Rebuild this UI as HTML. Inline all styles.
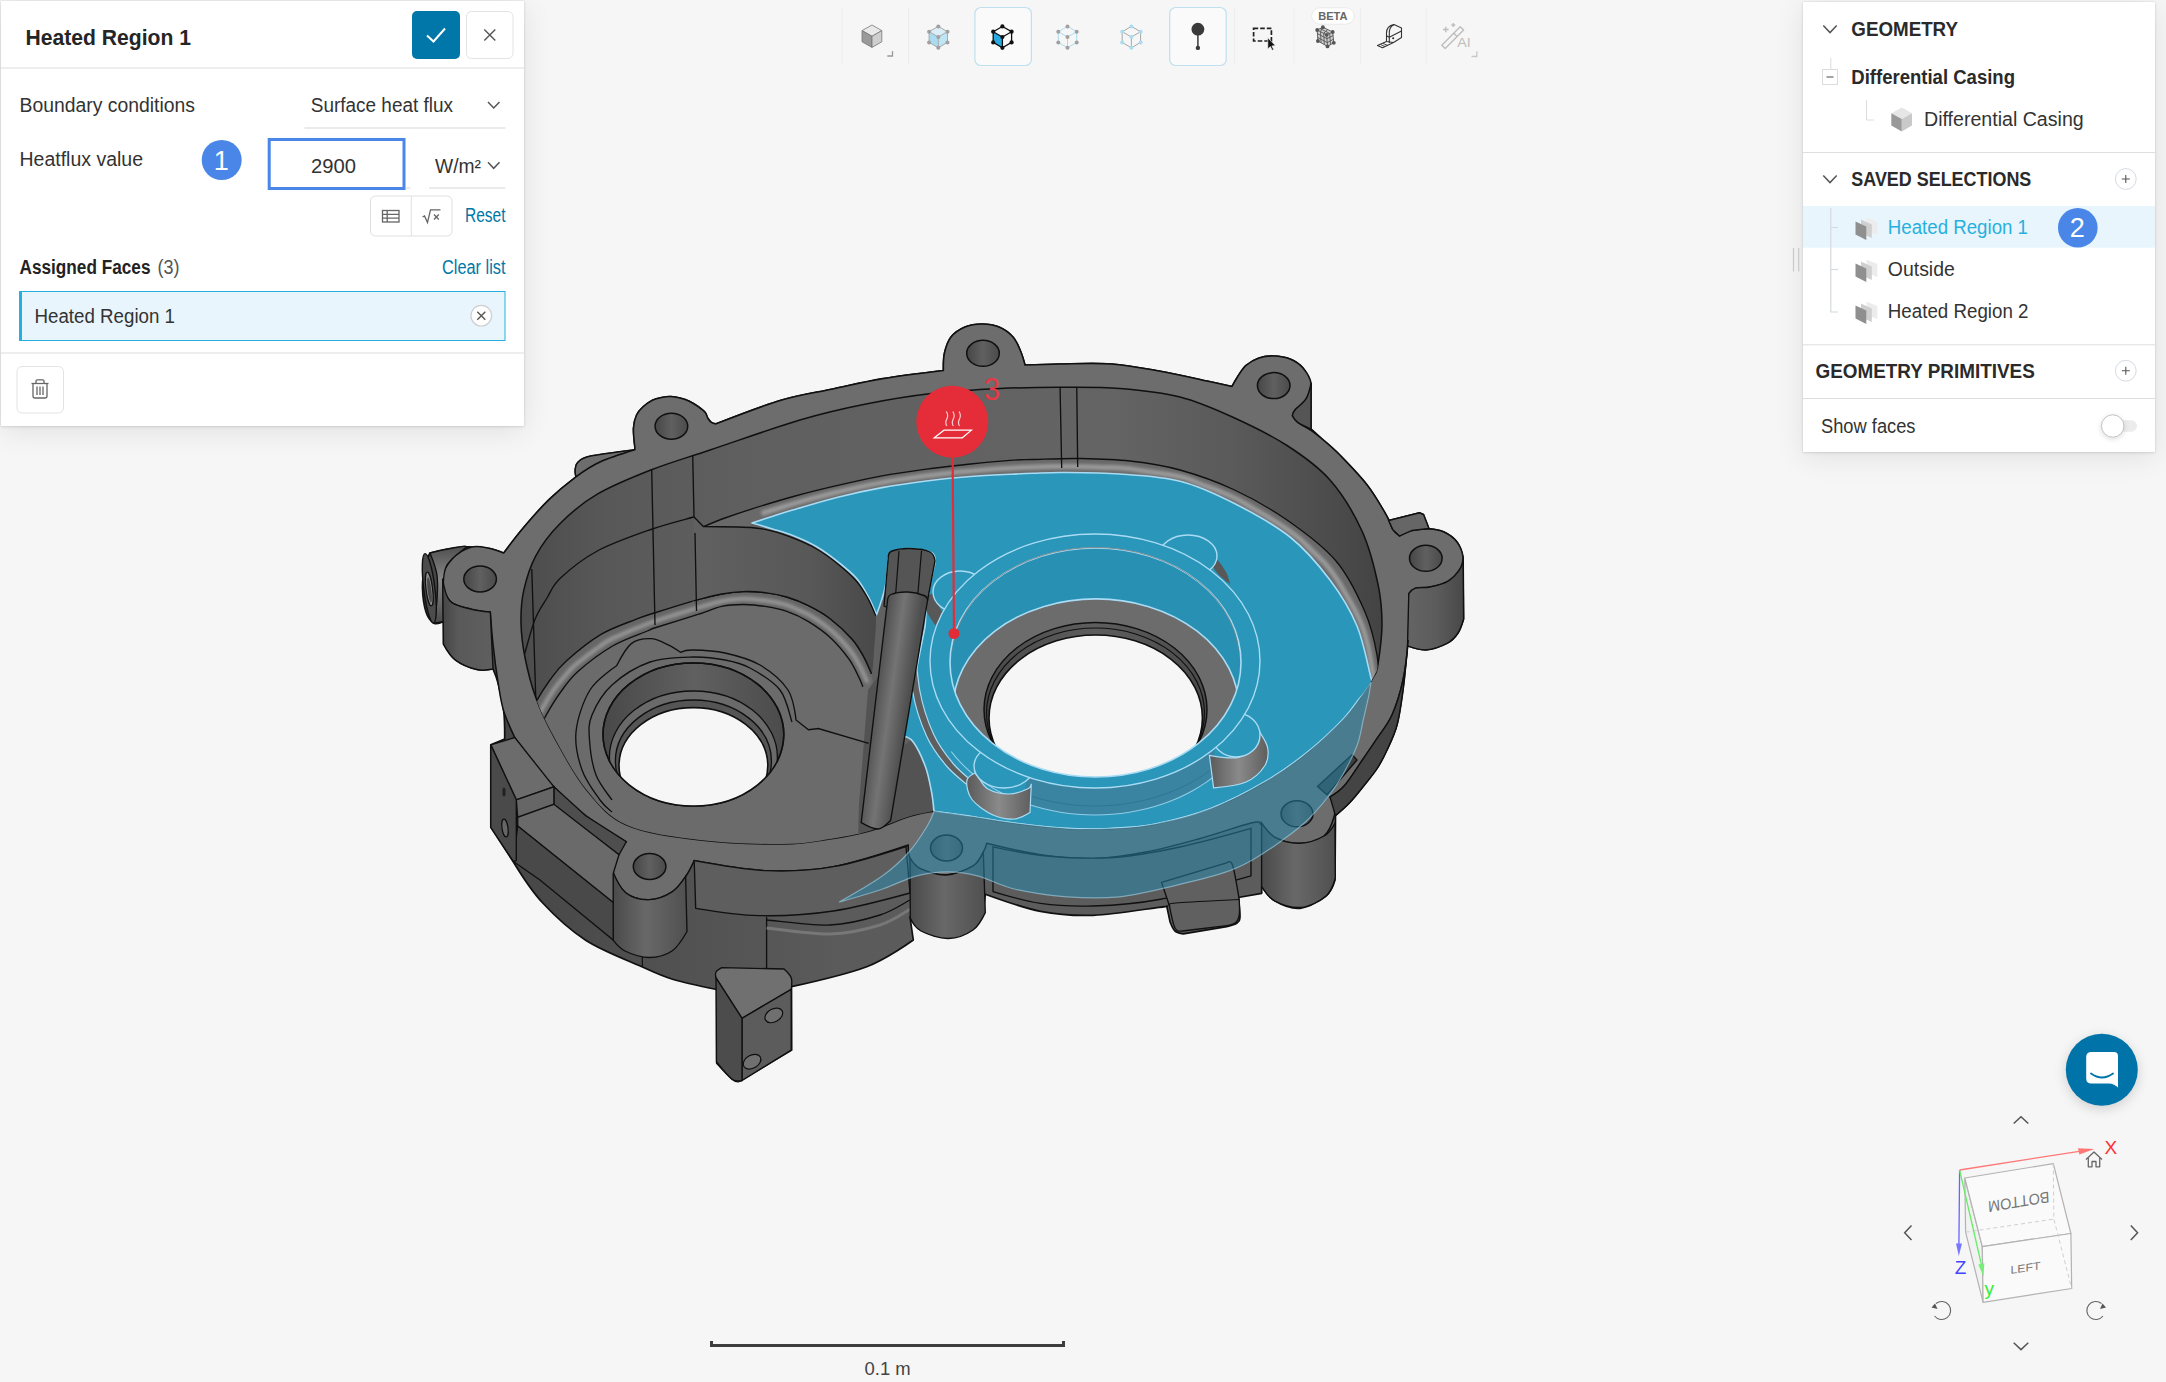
<!DOCTYPE html>
<html lang="en">
<head>
<meta charset="utf-8">
<title>Heated Region 1</title>
<style>
html,body{margin:0;padding:0;}
body{width:2166px;height:1382px;overflow:hidden;background:#f6f6f6;position:relative;font-family:"Liberation Sans",sans-serif;}
svg{position:absolute;left:0;top:0;overflow:visible;}
svg text{font-family:"Liberation Sans",sans-serif;}
.abs{position:absolute;}
#viewer{left:0;top:0;width:2166px;height:1382px;}
#leftpanel{left:1px;top:1px;width:523px;height:425px;background:#fff;box-shadow:0 1px 3px rgba(0,0,0,.10),0 5px 28px rgba(0,0,0,.09),0 0 1px rgba(0,0,0,.15);}
#rightpanel{left:1803px;top:2px;width:352px;height:450px;background:#fff;box-shadow:0 1px 3px rgba(0,0,0,.10),0 5px 28px rgba(0,0,0,.09),0 0 1px rgba(0,0,0,.15);}
.t{fill:#333;font-size:19.5px;}
.b{font-weight:bold;}
.lnk{fill:#0077a8;}
</style>
</head>
<body>
<div id="viewer" class="abs">
<svg id="model" width="2166" height="1382" viewBox="0 0 2166 1382">
<defs>
<linearGradient id="gwall" gradientUnits="userSpaceOnUse" x1="520" y1="0" x2="1390" y2="0">
<stop offset="0" stop-color="#4c4c4c"/><stop offset="0.1" stop-color="#585858"/><stop offset="0.25" stop-color="#5f5f5f"/><stop offset="0.5" stop-color="#626262"/><stop offset="0.68" stop-color="#646464"/><stop offset="0.82" stop-color="#5a5a5a"/><stop offset="0.93" stop-color="#4c4c4c"/><stop offset="1" stop-color="#424242"/>
</linearGradient>
<linearGradient id="gpocket" gradientUnits="userSpaceOnUse" x1="700" y1="0" x2="880" y2="0">
<stop offset="0" stop-color="#606060"/><stop offset="0.6" stop-color="#585858"/><stop offset="1" stop-color="#484848"/>
</linearGradient>
<linearGradient id="ghole" gradientUnits="userSpaceOnUse" x1="0" y1="0" x2="1" y2="0" gradientTransform="matrix(34 0 0 1 -17 0)">
<stop offset="0" stop-color="#454545"/><stop offset="0.5" stop-color="#606060"/><stop offset="1" stop-color="#4a4a4a"/>
</linearGradient>
<linearGradient id="gcyl" x1="0" y1="0" x2="1" y2="0">
<stop offset="0" stop-color="#4a4a4a"/><stop offset="0.45" stop-color="#686868"/><stop offset="1" stop-color="#505050"/>
</linearGradient>
<linearGradient id="grod" x1="0" y1="0" x2="1" y2="0">
<stop offset="0" stop-color="#4c4c4c"/><stop offset="0.5" stop-color="#727272"/><stop offset="1" stop-color="#4e4e4e"/>
</linearGradient>
<linearGradient id="gbore1" gradientUnits="userSpaceOnUse" x1="600" y1="0" x2="790" y2="0">
<stop offset="0" stop-color="#484848"/><stop offset="0.5" stop-color="#606060"/><stop offset="1" stop-color="#4a4a4a"/>
</linearGradient>
<linearGradient id="gbore2" gradientUnits="userSpaceOnUse" x1="985" y1="0" x2="1206" y2="0">
<stop offset="0" stop-color="#484848"/><stop offset="0.5" stop-color="#5e5e5e"/><stop offset="1" stop-color="#4a4a4a"/>
</linearGradient>
</defs>
<linearGradient id="gside" gradientUnits="userSpaceOnUse" x1="490" y1="0" x2="1000" y2="0"><stop offset="0" stop-color="#454545"/><stop offset="0.35" stop-color="#515151"/><stop offset="0.7" stop-color="#5b5b5b"/><stop offset="1" stop-color="#5c5c5c"/></linearGradient>
<path d="M634.9 447.3 C634.9 447.3 633.2 433.4 633.5 428 C633.8 422.6 635 418.5 636.6 415 C638.2 411.5 640.5 409.2 643.1 406.8 C645.7 404.4 649.2 401.9 652.3 400.3 C655.4 398.8 658.5 398.1 661.6 397.5 C664.7 396.9 667.7 396.5 670.8 396.6 C673.9 396.7 676.9 397.2 680 398 C683.1 398.8 686.2 399.7 689.3 401.2 C692.4 402.7 695.9 404.9 698.5 406.8 C701.1 408.7 703.4 410.4 705 412.3 C706.6 414.2 706.9 416.8 708 418.5 C709.1 420.2 710.1 421.6 711.4 422.5 C712.7 423.4 716 423.9 716 423.9 C716 423.9 761.4 406.1 780.9 400.3 C800.4 394.5 816.1 392.6 833 389 C849.9 385.4 864.1 381.8 882.5 378.7 C900.9 375.6 943.4 370.5 943.4 370.5 C943.4 370.5 943.2 358.6 944.5 353 C945.8 347.4 947.6 341.3 951 337 C954.4 332.7 959.8 329.2 965 327 C970.2 324.8 976.3 324 982 324 C987.7 324 993.8 324.8 999 327 C1004.2 329.2 1009.4 333 1013 337 C1016.6 341 1018.5 346.3 1020.5 351 C1022.5 355.7 1025 365 1025 365 C1025 365 1045.6 364.2 1060 364 C1074.4 363.8 1095 362.8 1111.5 364 C1128 365.2 1143.1 368.2 1159 371 C1174.9 373.8 1194.8 378.4 1207 381 C1219.2 383.6 1232 386.5 1232 386.5 C1232 386.5 1235.2 380.5 1237.5 377 C1239.8 373.5 1242.4 368.7 1246 365.5 C1249.6 362.3 1254.4 359.6 1259 358 C1263.6 356.4 1268.5 355.8 1273.7 356 C1278.9 356.2 1285.1 357 1290 359 C1294.9 361 1299.5 363.9 1303 368 C1306.5 372.1 1311 383.5 1311 383.5 L1311 429 L1322 439 C1322 439 1333 448.1 1340.6 455.8 C1348.1 463.5 1359.7 475.4 1367.3 485.2 C1374.9 495 1382.4 508.7 1386 514.6 C1389.6 520.5 1388.7 520.5 1388.7 520.5 L1419.5 512.8 L1423.5 514.6 L1428.9 528.5 C1428.9 528.5 1439.3 529.8 1444 532 C1448.7 534.2 1453.8 537.8 1457 542 C1460.2 546.2 1463.1 557.5 1463.1 557.5 L1463.6 619 C1463.6 619 1460.7 629 1458 633 C1455.3 637 1452.9 640.2 1447.6 643 C1442.3 645.8 1432.9 649.3 1426.2 649.8 C1419.5 650.3 1407.5 645.8 1407.5 645.8 C1407.5 645.8 1404.8 676.8 1403 690 C1401.2 703.2 1399.7 715 1397 725 C1394.3 735 1390.3 742.8 1387 750 C1383.7 757.2 1381.2 762.2 1377 768.5 C1372.8 774.8 1366.6 782.2 1362 788 C1357.4 793.8 1353.7 798.4 1349.3 803 C1344.9 807.6 1335.5 815.6 1335.5 815.6 L1335 880 C1335 880 1331.8 891.3 1326 896 C1320.2 900.7 1308.5 907.5 1300 908.3 C1291.5 909.1 1281.4 904.7 1275 901 C1268.6 897.3 1261.7 886 1261.7 886 L1261.7 893.3 L1238.3 897.5 C1238.3 897.5 1240.2 912.5 1240 916.7 C1239.8 921 1239.2 921.3 1237 923 C1234.8 924.7 1226.7 926.7 1226.7 926.7 L1183.3 933.8 C1183.3 933.8 1177.2 933 1175 931 C1172.8 929 1170 921.7 1170 921.7 L1166.7 906 C1166.7 906 1171.2 905.9 1159 907.4 C1146.8 908.9 1113 914.6 1093.2 915.3 C1073.5 915.9 1058.5 914.8 1040.5 911.3 C1022.5 907.8 985.3 894.2 985.3 894.2 L983.3 913.3 C983.3 913.3 979.1 925.1 973 929 C966.9 932.9 955.4 936.5 946.7 936.7 C938 936.9 927.1 933.3 921 930 C914.9 926.7 910 917 910 917 L913.3 940 C913.3 940 887 958.9 866.7 966.7 C846.4 974.5 791.5 986.7 791.5 986.7 L791.7 1050 L739 1081.5 C739 1081.5 735.6 1082 731.9 1079 C728.2 1076 716.7 1063.3 716.7 1063.3 L716.7 989.5 C716.7 989.5 685.2 983.1 672.5 979.2 C659.8 975.3 655.2 972.7 640.7 966.2 C626.2 959.7 602.1 950.8 585.7 940.2 C569.3 929.6 554.3 915.5 542.3 902.5 C530.2 889.5 513.4 862 513.4 862 L490.8 827.3 L490.8 744.9 L504.7 739 C504.7 739 504.8 720.2 503.7 711 C502.6 701.8 500.1 691 498.3 684 C496.5 677 493 669 493 669 C493 669 483.1 671 476.9 669.5 C470.6 668 461.1 664.2 455.5 660 C449.9 655.8 443.5 644 443.5 644 L443.5 621.5 C443.5 621.5 436.9 624.8 434 623.2 C431.1 621.6 427.9 617.9 426 612 C424.1 606.1 422.7 595.8 422.5 588 C422.3 580.2 423.8 570.8 425 565 C426.2 559.2 430 553 430 553 C430 553 448.6 548.7 455.5 547.7 C462.4 546.7 465.8 546.9 471.5 547 C477.2 547.1 484.6 547.5 490 548.5 C495.4 549.5 503.7 553.1 503.7 553.1 C503.7 553.1 514.9 537.9 522.4 529 C529.9 520.1 540.1 508.3 549 499.6 C557.9 490.9 576 476.8 576 476.8 C576 476.8 574.9 472.4 575.2 470 C575.5 467.6 575.2 464.8 577.8 462.5 C580.3 460.2 581 458.3 590.5 456.2 C600 454.1 634.9 449.8 634.9 449.8 L634.9 447.3 Z" fill="url(#gside)" stroke="#101010" stroke-width="1.7" stroke-linejoin="round"/>
<filter id="bl1" x="-10%" y="-10%" width="120%" height="120%"><feGaussianBlur stdDeviation="1.6"/></filter>
<path d="M576 476.8 C576 476.8 574.9 472.4 575.2 470 C575.5 467.6 575.2 464.8 577.8 462.5 C580.3 460.2 581 458.3 590.5 456.2 C600 454.1 634.9 449.8 634.9 449.8 C634.9 449.8 609.8 457.5 600 462 C590.2 466.5 576 476.8 576 476.8 Z" fill="#6d6d6d" stroke="#101010" stroke-width="1.35"/>
<path d="M634.9 447.3 C634.9 447.3 633.2 433.4 633.5 428 C633.8 422.6 635 418.5 636.6 415 C638.2 411.5 640.5 409.2 643.1 406.8 C645.7 404.4 649.2 401.9 652.3 400.3 C655.4 398.8 658.5 398.1 661.6 397.5 C664.7 396.9 667.7 396.5 670.8 396.6 C673.9 396.7 676.9 397.2 680 398 C683.1 398.8 686.2 399.7 689.3 401.2 C692.4 402.7 695.9 404.9 698.5 406.8 C701.1 408.7 703.4 410.4 705 412.3 C706.6 414.2 706.9 416.8 708 418.5 C709.1 420.2 710.1 421.6 711.4 422.5 C712.7 423.4 716 423.9 716 423.9 C716 423.9 761.4 406.1 780.9 400.3 C800.4 394.5 816.1 392.6 833 389 C849.9 385.4 864.1 381.8 882.5 378.7 C900.9 375.6 943.4 370.5 943.4 370.5 C943.4 370.5 943.2 358.6 944.5 353 C945.8 347.4 947.6 341.3 951 337 C954.4 332.7 959.8 329.2 965 327 C970.2 324.8 976.3 324 982 324 C987.7 324 993.8 324.8 999 327 C1004.2 329.2 1009.4 333 1013 337 C1016.6 341 1018.5 346.3 1020.5 351 C1022.5 355.7 1025 365 1025 365 C1025 365 1045.6 364.2 1060 364 C1074.4 363.8 1095 362.8 1111.5 364 C1128 365.2 1143.1 368.2 1159 371 C1174.9 373.8 1194.8 378.4 1207 381 C1219.2 383.6 1232 386.5 1232 386.5 C1232 386.5 1235.2 380.5 1237.5 377 C1239.8 373.5 1242.4 368.7 1246 365.5 C1249.6 362.3 1254.4 359.6 1259 358 C1263.6 356.4 1268.5 355.8 1273.7 356 C1278.9 356.2 1285.1 357 1290 359 C1294.9 361 1299.5 363.9 1303 368 C1306.5 372.1 1310.5 378.3 1311 383.5 C1311.5 388.7 1308.7 394.6 1306 399 C1303.3 403.4 1297.3 407.2 1295 410 C1292.7 412.8 1292.4 415.6 1292.4 415.6 C1292.4 415.6 1294.6 419.8 1297.7 422.3 C1300.8 424.8 1307 427.7 1311 430.5 C1315 433.3 1322 439 1322 439 C1322 439 1333 448.1 1340.6 455.8 C1348.1 463.5 1359.7 475.4 1367.3 485.2 C1374.9 495 1381.8 507.2 1386 514.6 C1390.2 522 1390.5 525.8 1392.7 529.4 C1394.9 533 1399.4 536 1399.4 536 C1399.4 536 1407.1 531.7 1412 530.5 C1416.9 529.3 1423.6 528.8 1428.9 529 C1434.2 529.2 1439.3 529.8 1444 532 C1448.7 534.2 1453.8 537.8 1457 542 C1460.2 546.2 1462.6 553 1463.1 557.5 C1463.6 562 1462.6 565 1460 569 C1457.4 573 1452.6 578.5 1447.6 581.5 C1442.6 584.5 1435.3 585.9 1430 587 C1424.7 588.1 1419 587.1 1415.5 588.2 C1412 589.3 1408.8 593.6 1408.8 593.6 C1408.8 593.6 1409.2 625.6 1408.2 640 C1407.2 654.4 1405.7 667.5 1403 680 C1400.3 692.5 1396.5 705 1392 715 C1387.5 725 1380.8 732.7 1376 740 C1371.2 747.3 1368.4 751.3 1363.2 758.8 C1358 766.3 1350.5 778.6 1345 785 C1339.5 791.4 1330 797 1330 797 C1330 797 1332.5 800.8 1333.2 804 C1333.9 807.2 1335.7 811 1334.2 816.3 C1332.7 821.6 1329.7 831.5 1324 836 C1318.3 840.5 1308 843 1300 843.3 C1292 843.6 1282.1 840.8 1276 838 C1269.9 835.2 1266 829.2 1263.3 826.7 C1260.6 824.2 1260 823.3 1260 823.3 C1260 823.3 1261.3 820.4 1251 823 C1240.7 825.6 1215.9 834.2 1198.4 839 C1180.9 843.8 1163.3 848.7 1145.8 852 C1128.3 855.3 1110.8 858.2 1093.2 858.7 C1075.7 859.2 1058.2 857.3 1040.5 854.7 C1022.8 852.1 986.7 843.3 986.7 843.3 C986.7 843.3 985.6 848.2 983.3 852 C981 855.8 979.1 862.2 973 866 C966.9 869.8 955.4 874.5 946.7 875 C938 875.5 927.1 871.8 921 869 C914.9 866.2 912.1 862 910 858 C907.9 854 908.3 845 908.3 845 C908.3 845 856.9 862.4 833.3 866.7 C809.7 871 789.9 871.7 766.7 870.7 C743.5 869.7 694.2 860.6 694.2 860.6 C694.2 860.6 689.3 871.3 685.6 876.5 C681.9 881.7 678 888.1 672 892 C666 895.9 657.1 899.5 649.4 899.7 C641.7 899.9 632.2 897.8 626 893 C619.8 888.2 614.4 877 612.4 870.7 C610.4 864.4 611.7 859.8 614 855 C616.3 850.2 626.3 841.8 626.3 841.8 C626.3 841.8 597.8 824.9 585.7 815.7 C573.6 806.5 565.7 799.8 553.9 786.8 C542.1 773.8 514.8 737.6 514.8 737.6 C514.8 737.6 506.4 719.9 503.7 711 C500.9 702.1 500.1 695.2 498.3 684 C496.5 672.8 494.3 656 493 644 C491.7 632 490.3 612 490.3 612 C490.3 612 478.2 611.1 471.5 609.3 C464.8 607.5 454.8 606.1 450 601 C445.2 595.9 442.3 585.5 442.6 578.5 C442.9 571.5 447.2 564.2 452 559 C456.8 553.8 465.2 548.8 471.5 547 C477.8 545.2 484.6 547.5 490 548.5 C495.4 549.5 503.7 553.1 503.7 553.1 C503.7 553.1 514.9 537.9 522.4 529 C529.9 520.1 540.1 508.3 549 499.6 C557.9 490.9 567.5 483.1 576 476.8 C584.5 470.5 590.2 466.5 600 462 C609.8 457.5 634.9 449.8 634.9 449.8 L634.9 447.3 Z" fill="#6d6d6d" stroke="#101010" stroke-width="1.5" stroke-linejoin="round"/>
<path d="M521 622.7 C520.8 611.6 521.2 601.8 523.7 590.6 C526.2 579.5 529.8 566.9 535.8 555.8 C541.8 544.6 549.6 534 559.9 523.7 C570.1 513.4 582.1 503.1 597.3 494.2 C612.4 485.2 632 477.4 650.8 470 C669.6 462.6 685.1 458.3 710 450 C734.9 441.7 774 427.7 800 420 C826 412.3 843.8 408.4 866 404 C888.2 399.6 911 395.9 933.3 393.3 C955.6 390.7 978.9 389.5 1000 388.5 C1021.1 387.5 1040 387.3 1060 387.3 C1080 387.3 1100 386.9 1120 388.5 C1140 390.1 1161.1 392.2 1180 397 C1198.9 401.8 1215.7 409.4 1233.5 417.5 C1251.3 425.6 1270.9 435.1 1287 445.5 C1303.1 455.9 1317.5 465.8 1330 480 C1342.5 494.2 1354 513.6 1362 531 C1370 548.4 1374.7 568.6 1378 584.2 C1381.3 599.8 1382 611 1382 624.4 C1382 637.8 1379.3 655.9 1378 664.5 C1376.7 673.1 1377 670.4 1374 676 C1371 681.6 1365.3 690.7 1360 698 C1354.7 705.3 1351.1 711 1342.4 720 C1333.7 729 1320.5 741.7 1307.8 751.9 C1295.1 762.1 1282.4 771.5 1266.2 781 C1250 790.5 1229.3 801.4 1210.8 808.6 C1192.3 815.8 1172.2 820.7 1155.4 824 C1138.6 827.3 1124.8 827.8 1110 828.5 C1095.2 829.2 1082.8 829.3 1066.8 828.4 C1050.8 827.5 1029.3 824.9 1014 823 C998.7 821.1 988.3 819 975 817 C961.7 815 934 811.3 934 811.3 C934 811.3 919.8 813.3 909 816.6 C898.2 819.9 882.7 827.3 869.5 831 C856.3 834.7 844.4 836.8 830 839 C815.6 841.2 805 843.8 783.3 844 C761.6 844.2 726.1 843.2 700 840 C673.9 836.8 645.6 833.3 626.7 825 C607.8 816.7 598.7 804.5 586.7 790 C574.7 775.5 563 753.1 554.5 737.7 C546 722.3 540.7 711 535.8 697.6 C530.9 684.2 527.5 670 525 657.5 C522.5 645 521.2 633.9 521 622.7 Z" fill="url(#gwall)" stroke="#101010" stroke-width="1.5"/>
<clipPath id="ccav"><path d="M521 622.7 C520.8 611.6 521.2 601.8 523.7 590.6 C526.2 579.5 529.8 566.9 535.8 555.8 C541.8 544.6 549.6 534 559.9 523.7 C570.1 513.4 582.1 503.1 597.3 494.2 C612.4 485.2 632 477.4 650.8 470 C669.6 462.6 685.1 458.3 710 450 C734.9 441.7 774 427.7 800 420 C826 412.3 843.8 408.4 866 404 C888.2 399.6 911 395.9 933.3 393.3 C955.6 390.7 978.9 389.5 1000 388.5 C1021.1 387.5 1040 387.3 1060 387.3 C1080 387.3 1100 386.9 1120 388.5 C1140 390.1 1161.1 392.2 1180 397 C1198.9 401.8 1215.7 409.4 1233.5 417.5 C1251.3 425.6 1270.9 435.1 1287 445.5 C1303.1 455.9 1317.5 465.8 1330 480 C1342.5 494.2 1354 513.6 1362 531 C1370 548.4 1374.7 568.6 1378 584.2 C1381.3 599.8 1382 611 1382 624.4 C1382 637.8 1379.3 655.9 1378 664.5 C1376.7 673.1 1377 670.4 1374 676 C1371 681.6 1365.3 690.7 1360 698 C1354.7 705.3 1351.1 711 1342.4 720 C1333.7 729 1320.5 741.7 1307.8 751.9 C1295.1 762.1 1282.4 771.5 1266.2 781 C1250 790.5 1229.3 801.4 1210.8 808.6 C1192.3 815.8 1172.2 820.7 1155.4 824 C1138.6 827.3 1124.8 827.8 1110 828.5 C1095.2 829.2 1082.8 829.3 1066.8 828.4 C1050.8 827.5 1029.3 824.9 1014 823 C998.7 821.1 988.3 819 975 817 C961.7 815 934 811.3 934 811.3 C934 811.3 919.8 813.3 909 816.6 C898.2 819.9 882.7 827.3 869.5 831 C856.3 834.7 844.4 836.8 830 839 C815.6 841.2 805 843.8 783.3 844 C761.6 844.2 726.1 843.2 700 840 C673.9 836.8 645.6 833.3 626.7 825 C607.8 816.7 598.7 804.5 586.7 790 C574.7 775.5 563 753.1 554.5 737.7 C546 722.3 540.7 711 535.8 697.6 C530.9 684.2 527.5 670 525 657.5 C522.5 645 521.2 633.9 521 622.7 Z"/></clipPath>
<g clip-path="url(#ccav)">
<path d="M529 718 C530 708.3 532.7 707.9 536.2 701.6 C539.7 695.3 545 686.8 550 680 C555 673.2 557.8 668.6 566.3 661 C574.8 653.4 589.4 641.3 601 634.4 C612.6 627.5 626.9 623 635.8 619.4 C644.7 615.8 644.6 616.1 654.3 613 C663.9 609.9 682.5 604 693.7 600.8 C704.9 597.6 713.4 595.5 721.7 594 C730 592.5 736.2 591.8 743.4 591.6 C750.6 591.4 757.8 591.7 765 592.6 C772.2 593.5 779.5 594.8 786.8 597 C794 599.2 801.3 602 808.5 605.6 C815.7 609.2 823 613.1 830.2 618.7 C837.5 624.3 846.5 632.7 852 639 C857.5 645.3 860.2 650.5 863.5 656.3 C866.8 662.1 869.9 667.6 871.5 673.7 C873.1 679.8 873 693 873 693 L858.9 806 L862 845 C862 845 810.3 849.8 783.3 850 C756.3 850.2 727.2 849.3 700 846 C672.8 842.7 641.7 837.7 620 830 C598.3 822.3 585 811.7 570 800 C555 788.3 530 760 530 760 C530 760 528 727.7 529 718 Z" fill="#6b6b6b"/>
<path d="M868 690 L905 640 C905 640 901.7 719.6 903 736.5 C904.3 753.4 909.2 736.6 912.9 741.5 C916.6 746.4 922.1 757.8 925.2 766 C928.3 774.2 930.2 782.4 931.3 790.7 C932.4 799 932 816 932 816 L900 830 L858 845 L858.9 806 L868 690 Z" fill="#535353"/>
<path d="M529 718 C528.7 712.9 532.7 707.9 536.2 701.6 C539.7 695.3 545 686.8 550 680 C555 673.2 557.8 668.6 566.3 661 C574.8 653.4 589.4 641.3 601 634.4 C612.6 627.5 626.9 623 635.8 619.4 C644.7 615.8 644.6 616.1 654.3 613 C663.9 609.9 682.5 604 693.7 600.8 C704.9 597.6 713.4 595.5 721.7 594 C730 592.5 736.2 591.8 743.4 591.6 C750.6 591.4 757.8 591.7 765 592.6 C772.2 593.5 779.5 594.8 786.8 597 C794 599.2 801.3 602 808.5 605.6 C815.7 609.2 823 613.1 830.2 618.7 C837.5 624.3 846.5 632.7 852 639 C857.5 645.3 860.2 650.5 863.5 656.3 C866.8 662.1 871.6 668.6 871.5 673.7 C871.4 678.8 864.8 686 862.8 686.7 C860.8 687.4 861.5 682.6 859.2 678 C856.9 673.4 853.8 666 849 659.2 C844.2 652.5 837 643.8 830.2 637.5 C823.5 631.2 815.7 626 808.5 621.6 C801.3 617.2 794 613.9 786.8 611.4 C779.5 608.9 772.2 607.5 765 606.4 C757.8 605.2 750.6 604.5 743.4 604.5 C736.2 604.5 729.4 604.7 721.7 606.4 C714 608.1 708.2 611.2 697.2 614.7 C686.2 618.2 664.3 624.8 656 627.5 C647.7 630.2 654.6 627.9 647.4 631 C640.2 634.1 624.2 639.2 612.6 646 C601 652.8 586.7 663.7 577.9 671.5 C569.1 679.3 565.2 685.9 560 693 C554.8 700.1 550.3 707.8 546.6 714.3 C542.9 720.8 540.9 731.4 538 732 C535.1 732.6 529.3 723.1 529 718 Z" fill="#666"/>
<path d="M534 725.7 C535 723.5 537.8 716.9 540 712.7 C542.2 708.5 544.7 704.4 547.1 700.3 C549.6 696.3 552 692.1 554.8 688.3 C557.6 684.4 560.8 680.8 563.9 677.2 C567 673.6 570 669.8 573.4 666.6 C576.9 663.3 580.9 660.6 584.7 657.7 C588.5 654.8 592.3 651.9 596.1 649.2 C600 646.4 603.7 643.4 607.9 641 C612 638.6 616.5 636.9 620.8 635 C625.2 633 629.6 631.2 634 629.3 C638.4 627.5 642.8 625.7 647.2 624 C651.7 622.3 656.2 620.8 660.8 619.3 C665.3 617.8 669.9 616.4 674.4 615 C679 613.6 683.5 612.2 688.1 610.8 C692.7 609.4 697.3 608 701.8 606.7 C706.4 605.3 710.9 603.8 715.6 602.7 C720.2 601.5 724.9 600.7 729.6 600 C734.3 599.4 739.1 598.8 743.8 598.7 C748.6 598.7 753.4 599.2 758.1 599.7 C762.8 600.2 767.6 600.9 772.2 601.7 C776.9 602.6 781.7 603.5 786.2 604.9 C790.7 606.3 795.1 608.4 799.4 610.4 C803.7 612.3 808.1 614.3 812.2 616.7 C816.3 619.1 820.3 621.9 824.1 624.7 C827.9 627.6 831.6 630.6 835.1 633.8 C838.5 637.1 841.8 640.6 844.9 644.2 C848 647.7 851.1 651.4 853.7 655.4 C856.3 659.3 858.6 663.6 860.8 667.8 C862.9 672.1 865.7 678.7 866.7 680.9" fill="none" stroke="#939393" stroke-width="4.5" filter="url(#bl1)" stroke-linecap="round"/>
<path d="M529 718 C530.2 715.3 532.7 707.9 536.2 701.6 C539.7 695.3 545 686.8 550 680 C555 673.2 557.8 668.6 566.3 661 C574.8 653.4 589.4 641.3 601 634.4 C612.6 627.5 626.9 623 635.8 619.4 C644.7 615.8 644.6 616.1 654.3 613 C663.9 609.9 682.5 604 693.7 600.8 C704.9 597.6 713.4 595.5 721.7 594 C730 592.5 736.2 591.8 743.4 591.6 C750.6 591.4 757.8 591.7 765 592.6 C772.2 593.5 779.5 594.8 786.8 597 C794 599.2 801.3 602 808.5 605.6 C815.7 609.2 823 613.1 830.2 618.7 C837.5 624.3 846.5 632.7 852 639 C857.5 645.3 860.2 650.5 863.5 656.3 C866.8 662.1 870.2 670.8 871.5 673.7" fill="none" stroke="#101010" stroke-width="1.35"/>
<path d="M538 732 C539.4 729 542.9 720.8 546.6 714.3 C550.3 707.8 554.8 700.1 560 693 C565.2 685.9 569.1 679.3 577.9 671.5 C586.7 663.7 601 652.8 612.6 646 C624.2 639.2 640.2 634.1 647.4 631 C654.6 627.9 647.7 630.2 656 627.5 C664.3 624.8 686.2 618.2 697.2 614.7 C708.2 611.2 714 608.1 721.7 606.4 C729.4 604.7 736.2 604.5 743.4 604.5 C750.6 604.5 757.8 605.2 765 606.4 C772.2 607.5 779.5 608.9 786.8 611.4 C794 613.9 801.3 617.2 808.5 621.6 C815.7 626 823.5 631.2 830.2 637.5 C837 643.8 844.2 652.5 849 659.2 C853.8 666 856.9 673.4 859.2 678 C861.5 682.6 862.2 685.2 862.8 686.7" fill="none" stroke="#101010" stroke-width="1.35"/>
<path d="M693.7 517 C693.9 503.2 694.4 517.4 696 519 C697.6 520.6 703.3 526.5 703.3 526.5 C703.3 526.5 739.2 526.7 750.7 527.5 C762.2 528.3 765.2 529.3 772.4 531.1 C779.6 532.9 786.9 535.5 794.1 538.4 C801.3 541.3 808.6 544.3 815.8 548.5 C823 552.7 830.8 558.3 837.5 563.7 C844.2 569.1 851.2 575.2 856.3 581 C861.4 586.8 864.6 592.6 867.9 598.4 C871.1 604.2 874.8 607.2 875.8 615.8 C876.8 624.4 874 650 874 650 C874 650 873.2 672.7 871.5 673.7 C869.8 674.8 866.8 662.1 863.5 656.3 C860.2 650.5 857.5 645.3 852 639 C846.5 632.7 837.5 624.3 830.2 618.7 C823 613.1 815.7 609.2 808.5 605.6 C801.3 602 794 599.2 786.8 597 C779.5 594.8 772.2 593.5 765 592.6 C757.8 591.7 750.6 591.4 743.4 591.6 C736.2 591.8 730 592.5 721.7 594 C713.4 595.5 698.2 599.5 693.7 600.8 C689.2 602.1 695 602 695 602 C695 602 693.5 530.8 693.7 517 Z" fill="url(#gpocket)"/>
<path d="M693.7 600.8 C698.4 599.7 713.4 595.5 721.7 594 C730 592.5 736.2 591.8 743.4 591.6 C750.6 591.4 757.8 591.7 765 592.6 C772.2 593.5 779.5 594.8 786.8 597 C794 599.2 801.3 602 808.5 605.6 C815.7 609.2 823 613.1 830.2 618.7 C837.5 624.3 846.5 632.7 852 639 C857.5 645.3 860.2 650.5 863.5 656.3 C866.8 662.1 870.2 670.8 871.5 673.7" fill="none" stroke="#101010" stroke-width="1.35"/>
<path d="M703.3 526.7 C703.3 526.7 717.4 520.8 725 518 C732.6 515.2 737.6 513.4 749 509.8 C760.4 506.2 778.6 500.6 793.4 496.5 C808.2 492.4 822.9 488.8 837.7 485.4 C852.5 481.9 867.2 478.5 882 475.8 C896.8 473.1 911.5 471.1 926.3 469.1 C941.1 467.1 956.8 465.5 970.7 464 C984.7 462.5 999.6 461.1 1010 460.3 C1020.4 459.6 1021.6 459.8 1033.3 459.5 C1045 459.2 1063.9 458.2 1080 458.5 C1096.1 458.8 1113.3 459.1 1130 461 C1146.7 462.9 1162.8 465.2 1180 470 C1197.2 474.8 1215.7 481.2 1233.5 489.5 C1251.3 497.8 1269.9 508.1 1287 520 C1304.1 531.9 1323 545.7 1336 561 C1349 576.3 1358.2 596.3 1365 612 C1371.8 627.7 1374.7 642 1377 655 C1379.3 668 1379.2 684.2 1379 690 C1378.8 695.8 1376 690 1376 690 C1376 690 1374.2 688.6 1371 677.9 C1367.8 667.2 1363.8 642.3 1357 626 C1350.2 609.7 1341.2 594.8 1330 580 C1318.8 565.2 1306.1 549.8 1290 537 C1273.9 524.2 1251.8 512.3 1233.5 503 C1215.2 493.7 1198.9 486 1180 481.2 C1161.1 476.4 1139.5 475.4 1120 474 C1100.5 472.6 1077.8 472.6 1063.3 472.5 C1048.8 472.4 1042.2 473 1033.3 473.3 C1024.4 473.6 1020.4 473.8 1010 474.3 C999.6 474.8 984.7 475.4 970.7 476.5 C956.8 477.6 941.1 479.1 926.3 481 C911.5 482.9 896.8 484.9 882 487.6 C867.2 490.3 852.5 493.5 837.7 497.2 C822.9 500.9 804.4 506.6 793.4 509.8 C782.4 513 778.9 514.3 772 516.5 C765.1 518.7 752 523 752 523 L750.7 527 L703.3 526.7 Z" fill="#696969"/>
<path d="M761.6 513.5 C764.6 512.6 773.5 509.8 779.5 508 C785.4 506.2 791.4 504.4 797.4 502.7 C803.4 501 809.3 499.4 815.3 497.7 C821.4 496.1 827.4 494.5 833.4 493 C839.4 491.6 845.5 490.2 851.6 488.9 C857.6 487.5 863.7 486.2 869.8 484.9 C875.9 483.7 882 482.5 888.1 481.4 C894.2 480.4 900.4 479.5 906.6 478.6 C912.7 477.7 918.9 476.7 925 475.9 C931.2 475.1 937.4 474.5 943.6 473.8 C949.7 473.1 955.9 472.4 962.1 471.8 C968.3 471.2 974.5 470.7 980.7 470.2 C986.9 469.7 993.1 469.3 999.3 468.8 C1005.5 468.4 1011.7 468 1017.9 467.7 C1024.1 467.4 1030.3 467.2 1036.5 467 C1042.7 466.8 1049 466.7 1055.2 466.6 C1061.4 466.5 1067.6 466.3 1073.8 466.4 C1080 466.5 1086.3 466.7 1092.5 466.9 C1098.7 467.1 1104.9 467.3 1111.1 467.6 C1117.3 467.9 1123.5 468.2 1129.7 468.8 C1135.9 469.5 1142 470.7 1148.2 471.6 C1154.3 472.5 1160.5 473.2 1166.6 474.3 C1172.7 475.4 1178.9 476.2 1184.8 477.9 C1190.7 479.7 1196.4 482.4 1202.2 484.7 C1208 486.9 1213.9 489 1219.6 491.4 C1225.3 493.8 1231.1 496.1 1236.6 498.9 C1242.2 501.7 1247.4 505 1252.8 508.2 C1258.2 511.3 1263.6 514.4 1268.9 517.6 C1274.2 520.8 1279.5 524 1284.6 527.6 C1289.7 531.1 1294.7 534.7 1299.5 538.7 C1304.2 542.7 1308.5 547.3 1312.9 551.6 C1317.4 555.9 1322.1 560 1326.1 564.7 C1330.1 569.4 1333.7 574.4 1337.2 579.6 C1340.6 584.7 1343.5 590.2 1346.6 595.6 C1349.7 601 1353 606.3 1355.7 611.9 C1358.5 617.4 1361.1 623 1363.1 628.8 C1365.2 634.7 1366.7 640.8 1368.1 646.8 C1369.5 652.8 1370.4 659 1371.5 665 C1372.6 671.1 1374.1 680.3 1374.6 683.3" fill="none" stroke="#9a9a9a" stroke-width="5" filter="url(#bl1)"/>
<path d="M703.3 526.7 C703.3 526.7 717.4 520.8 725 518 C732.6 515.2 737.6 513.4 749 509.8 C760.4 506.2 778.6 500.6 793.4 496.5 C808.2 492.4 822.9 488.8 837.7 485.4 C852.5 481.9 867.2 478.5 882 475.8 C896.8 473.1 911.5 471.1 926.3 469.1 C941.1 467.1 956.8 465.5 970.7 464 C984.7 462.5 999.6 461.1 1010 460.3 C1020.4 459.6 1021.6 459.8 1033.3 459.5 C1045 459.2 1063.9 458.2 1080 458.5 C1096.1 458.8 1113.3 459.1 1130 461 C1146.7 462.9 1162.8 465.2 1180 470 C1197.2 474.8 1215.7 481.2 1233.5 489.5 C1251.3 497.8 1269.9 508.1 1287 520 C1304.1 531.9 1323 545.7 1336 561 C1349 576.3 1358.2 596.3 1365 612 C1371.8 627.7 1374.7 642 1377 655 C1379.3 668 1378.7 684.2 1379 690" fill="none" stroke="#101010" stroke-width="1.35"/>
<path d="M752 523 C752 523 765.1 518.7 772 516.5 C778.9 514.3 782.4 513 793.4 509.8 C804.4 506.6 822.9 500.9 837.7 497.2 C852.5 493.5 867.2 490.3 882 487.6 C896.8 484.9 911.5 482.9 926.3 481 C941.1 479.1 956.8 477.6 970.7 476.5 C984.7 475.4 999.6 474.8 1010 474.3 C1020.4 473.8 1024.4 473.6 1033.3 473.3 C1042.2 473 1048.8 472.4 1063.3 472.5 C1077.8 472.6 1100.5 472.6 1120 474 C1139.5 475.4 1161.1 476.4 1180 481.2 C1198.9 486 1215.2 493.7 1233.5 503 C1251.8 512.3 1273.9 524.2 1290 537 C1306.1 549.8 1318.8 565.2 1330 580 C1341.2 594.8 1350.2 609.7 1357 626 C1363.8 642.3 1368.3 668.1 1371 677.9 C1373.7 687.7 1373 685 1373 685 C1373 685 1365.1 692.2 1360 698 C1354.9 703.8 1351.1 711 1342.4 720 C1333.7 729 1320.5 741.7 1307.8 751.9 C1295.1 762.1 1282.4 771.5 1266.2 781 C1250 790.5 1229.3 801.4 1210.8 808.6 C1192.3 815.8 1172.2 820.7 1155.4 824 C1138.6 827.3 1124.8 827.8 1110 828.5 C1095.2 829.2 1082.8 829.3 1066.8 828.4 C1050.8 827.5 1029.3 824.9 1014 823 C998.7 821.1 988.3 819 975 817 C961.7 815 934 811.3 934 811.3 C934 811.3 932.8 798.2 931.3 790.7 C929.8 783.2 928.3 774.2 925.2 766 C922.1 757.8 916.6 746.4 912.9 741.5 C909.2 736.6 903 736.5 903 736.5 L925.2 625.8 C925.2 625.8 926 609.2 927.6 598.7 C929.2 588.2 935 563 935 563 C935 563 936.1 555.4 932 553 C927.9 550.6 916.8 548.7 910.4 548.5 C904 548.3 897.6 550.4 893.9 552 C890.2 553.6 888.1 558 888.1 558 C888.1 558 887.1 577.3 885.2 586.8 C883.3 596.3 876.5 614.8 876.5 614.8 C876.5 614.8 871.3 602.1 867.9 596 C864.5 589.9 861.4 583.9 856.3 578.1 C851.2 572.4 844.2 566.8 837.5 561.5 C830.8 556.2 823 550.5 815.8 546.3 C808.5 542 801.2 538.9 794 536 C786.8 533.1 779.4 531.1 772.4 528.9 C765.4 526.7 752 523 752 523 Z" fill="#2a96b9" stroke="#a9dcf4" stroke-width="1.6" stroke-linejoin="round"/>
</g>
<g clip-path="url(#ccav)">
<path d="M921 600 C919.7 606.7 913.8 625 913 640 C912.2 655 913.2 674.2 916 690 C918.8 705.8 924.3 722.5 930 735 C935.7 747.5 943 756.7 950 765 C957 773.3 968.3 781.7 972 785" fill="none" stroke="#5f5f5f" stroke-width="7" stroke-linecap="round"/>
<path d="M917.5 601 C916.2 607.7 910.3 626 909.5 641 C908.7 656 909.7 675.2 912.5 691 C915.3 706.8 920.8 723.5 926.5 736 C932.2 748.5 939.5 757.7 946.5 766 C953.5 774.3 964.8 782.7 968.5 786" fill="none" stroke="#a9dcf4" stroke-width="1.2"/>
<path d="M924.5 599 C923.2 605.7 917.3 624 916.5 639 C915.7 654 916.7 673.2 919.5 689 C922.3 704.8 927.8 721.5 933.5 734 C939.2 746.5 946.5 755.7 953.5 764 C960.5 772.3 971.8 780.7 975.5 784" fill="none" stroke="#a9dcf4" stroke-width="1.2"/>
<path d="M924 598 C924 598 931.3 592.3 934 594 C936.7 595.7 938.3 604.3 940 608 C941.7 611.7 944.7 613 944 616 C943.3 619 936 626 936 626 C936 626 929 616.7 927 612 C925 607.3 924 598 924 598 Z" fill="#585858"/>
<path d="M1212 566 C1212 566 1214.7 559 1217 560 C1219.3 561 1223.8 568 1226 572 C1228.2 576 1230 584 1230 584 C1230 584 1223 579 1220 576 C1217 573 1212 566 1212 566 Z" fill="#585858"/>
<path d="M1213.7 749.2 L1204.6 755.9 L1194.9 762.1 L1184.6 767.7 L1173.7 772.6 L1162.4 776.9 L1150.8 780.5 L1138.7 783.5 L1126.5 785.7 L1114 787.2 L1101.5 787.9 L1088.9 787.9 L1076.3 787.2 L1063.9 785.7 L1051.6 783.5 L1039.6 780.6 L1027.9 777 L1022.2 802.1 L1034.5 806.3 L1047.2 809.6 L1060.1 812.2 L1073.3 813.9 L1086.7 814.8 L1100.1 814.9 L1113.4 814.2 L1126.7 812.7 L1139.7 810.3 L1152.5 807.2 L1164.8 803.2 L1176.7 798.5 L1188.1 793.1 L1198.9 787 L1209 780.3 L1218.4 773 Z" fill="#3a84a2"/>
<path d="M1238.8 751.5 C1237.2 753.4 1232.7 759.1 1229.3 762.6 C1225.9 766.2 1222.2 769.7 1218.4 773 C1214.5 776.3 1210.4 779.4 1206.1 782.4 C1201.8 785.3 1197.3 788.1 1192.6 790.7 C1187.9 793.3 1183 795.8 1178 798 C1173 800.2 1167.8 802.2 1162.5 804 C1157.2 805.8 1151.8 807.4 1146.3 808.8 C1140.8 810.2 1135.2 811.3 1129.5 812.2 C1123.9 813.1 1118.1 813.8 1112.4 814.3 C1106.6 814.8 1100.8 815 1095 815 C1089.2 815 1083.4 814.8 1077.6 814.3 C1071.9 813.8 1066.1 813.1 1060.5 812.2 C1054.8 811.3 1049.2 810.2 1043.7 808.8 C1038.2 807.4 1032.8 805.8 1027.5 804 C1022.2 802.2 1017 800.2 1012 798 C1007 795.8 1002.1 793.3 997.4 790.7 C992.7 788.1 988.2 785.3 983.9 782.4 C979.6 779.4 975.5 776.3 971.6 773 C967.8 769.7 964.1 766.2 960.7 762.6 C957.3 759.1 952.8 753.4 951.2 751.5" fill="none" stroke="#a9dcf4" stroke-width="1.1" opacity="0.8"/>
<path d="M1222.2 760.6 C1220.6 761.9 1216.1 765.9 1212.9 768.4 C1209.7 770.9 1206.3 773.3 1202.8 775.6 C1199.3 777.8 1195.7 780 1192 782.1 C1188.3 784.1 1184.4 786.1 1180.5 787.9 C1176.6 789.7 1172.5 791.4 1168.4 792.9 C1164.3 794.5 1160.1 795.9 1155.8 797.2 C1151.6 798.4 1147.2 799.6 1142.8 800.6 C1138.5 801.6 1134 802.5 1129.5 803.2 C1125 804 1120.5 804.5 1115.9 805 C1111.4 805.4 1106.8 805.7 1102.2 805.9 C1097.7 806 1093.1 806 1088.5 805.9 C1083.9 805.8 1079.3 805.5 1074.8 805.1 C1070.2 804.6 1065.7 804.1 1061.2 803.3 C1056.7 802.6 1052.2 801.8 1047.9 800.8 C1043.5 799.8 1039.1 798.6 1034.8 797.4 C1030.6 796.1 1024.3 793.8 1022.2 793.1" fill="none" stroke="#2c6f8c" stroke-width="1.0" opacity="0.7"/>
<linearGradient id="gcres" x1="0" y1="0" x2="1" y2="0"><stop offset="0" stop-color="#5a5a5a"/><stop offset="0.5" stop-color="#8a8a8a"/><stop offset="1" stop-color="#5e5e5e"/></linearGradient>
<path d="M1256.5 728.3 C1256.5 728.3 1257.2 727.8 1259 731 C1260.8 734.2 1266.6 741.9 1267.6 747.7 C1268.6 753.5 1268.5 759.9 1264.8 765.7 C1261.1 771.5 1253.9 778.6 1245.4 782.3 C1236.9 786 1213.6 787.9 1213.6 787.9 L1209.4 755.3 C1209.4 755.3 1230.9 759.1 1238.5 757.4 C1246.1 755.7 1252 749.9 1255 745 C1258 740.1 1256.5 728.3 1256.5 728.3 Z" fill="url(#gcres)" stroke="#a9dcf4" stroke-width="1.2"/>
<path d="M975 773 C975 773 967.3 776.6 966.8 781 C966.3 785.4 967.6 793.8 972 799.5 C976.4 805.2 986 811.8 993 815 C1000 818.2 1007.8 819.4 1014 819 C1020.2 818.6 1030 812.6 1030 812.6 L1031.3 783.7 C1031.3 783.7 1031.1 787.3 1027.4 789 C1023.7 790.7 1015.6 794 1009 794 C1002.4 794 993.3 792 988 789 C982.7 786 979.6 778.5 977.4 775.8 C975.2 773.1 975 773 975 773 Z" fill="url(#gcres)" stroke="#a9dcf4" stroke-width="1.2"/>
<path d="M933 592 A27 21 0 1 0 987 592 A27 21 0 1 0 933 592 Z" fill="#2a96b9" stroke="#a9dcf4" stroke-width="1.4"/>
<path d="M1159 556 A29 21 0 1 0 1217 556 A29 21 0 1 0 1159 556 Z" fill="#2a96b9" stroke="#a9dcf4" stroke-width="1.4"/>
<path d="M1212 735 A24 22 0 1 0 1260 735 A24 22 0 1 0 1212 735 Z" fill="#2a96b9" stroke="#a9dcf4" stroke-width="1.4"/>
<path d="M974 766 A30 22 0 1 0 1034 766 A30 22 0 1 0 974 766 Z" fill="#2a96b9" stroke="#a9dcf4" stroke-width="1.4"/>
<path d="M930 661 A165 127 0 1 0 1260 661 A165 127 0 1 0 930 661 Z" fill="#2a96b9" stroke="#a9dcf4" stroke-width="1.4"/>
<path d="M931.4 661 A163.6 125.6 0 1 0 1258.6 661 A163.6 125.6 0 1 0 931.4 661 Z" fill="#2a96b9"/>
<clipPath id="cring"><path d="M950 662.5 A145.5 114.5 0 1 0 1241 662.5 A145.5 114.5 0 1 0 950 662.5 Z"/></clipPath>
<g clip-path="url(#cring)">
<path d="M950 662.5 A145.5 114.5 0 1 0 1241 662.5 A145.5 114.5 0 1 0 950 662.5 Z" fill="#2890b3"/>
<path d="M953 709 A143 110 0 1 0 1239 709 A143 110 0 1 0 953 709 Z" fill="#6c6c6c" stroke="#a9dcf4" stroke-width="1.6"/>
<path d="M984 709.5 A111.5 87 0 1 0 1207 709.5 A111.5 87 0 1 0 984 709.5 Z" fill="url(#gbore2)" stroke="#101010" stroke-width="1.5"/>
<path d="M986.5 713 A109 85 0 1 0 1204.5 713 A109 85 0 1 0 986.5 713 Z" fill="none" stroke="#101010" stroke-width="1.2"/>
<path d="M989 718 A106.7 83 0 1 0 1202.4 718 A106.7 83 0 1 0 989 718 Z" fill="#f6f6f6" stroke="#101010" stroke-width="1.6"/>
</g>
<path d="M950 662.5 A145.5 114.5 0 1 0 1241 662.5 A145.5 114.5 0 1 0 950 662.5 Z" fill="none" stroke="#a9dcf4" stroke-width="1.6"/>
<path d="M952.5 650.2 C953.1 647.5 954.3 639.1 956 633.7 C957.6 628.3 959.8 623 962.4 617.9 C965.1 612.7 968.3 607.7 971.9 602.9 C975.4 598.1 979.5 593.5 984 589.2 C988.4 584.9 993.3 580.8 998.6 577.1 C1003.8 573.3 1009.4 569.8 1015.3 566.7 C1021.1 563.6 1027.3 560.8 1033.7 558.5 C1040.1 556.1 1046.8 554 1053.5 552.4 C1060.3 550.8 1067.3 549.6 1074.3 548.7 C1081.3 547.9 1088.4 547.5 1095.5 547.5 C1102.6 547.5 1109.7 547.9 1116.7 548.7 C1123.7 549.6 1130.7 550.8 1137.5 552.4 C1144.2 554 1150.9 556.1 1157.3 558.5 C1163.7 560.8 1169.9 563.6 1175.7 566.7 C1181.6 569.8 1187.2 573.3 1192.4 577.1 C1197.7 580.8 1202.6 584.9 1207 589.2 C1211.5 593.5 1215.6 598.1 1219.1 602.9 C1222.7 607.7 1225.9 612.7 1228.6 617.9 C1231.2 623 1233.4 628.3 1235 633.7 C1236.7 639.1 1237.9 647.5 1238.5 650.2" fill="none" stroke="#7d7d7d" stroke-width="1.0" opacity="0.8"/>
</g>
<g clip-path="url(#ccav)">
<path d="M868.7 743.3 L818.3 728.5 L808.5 729.7 L796 720 C796 720 794 699.2 788 690 C782 680.8 770.5 671.2 760 665 C749.5 658.8 736.2 655.5 725 653 C713.8 650.5 700.2 650.1 692.8 650 C685.4 649.9 680.5 652.3 680.5 652.3 C680.5 652.3 673.1 647.2 668.2 644.9 C663.3 642.6 657.1 638.9 651 638.7 C644.9 638.5 637 639.1 631.3 643.6 C625.6 648.1 616.6 665.8 616.6 665.8 C616.6 665.8 596.8 679 590 690 C583.2 701 577.3 718.7 576 732 C574.7 745.3 578 758.7 582 770 C586 781.3 595 793 600 800 C605 807 610 810 612 812" fill="none" stroke="#101010" stroke-width="1.35"/>
<path d="M792 722 C790 716.7 787 699 780 690 C773 681 759.2 673 750 668 C740.8 663 734.5 661.8 725 660 C715.5 658.2 705.3 656.7 692.8 657 C680.3 657.3 663.5 657.3 650 662 C636.5 666.7 621.7 676.2 612 685 C602.3 693.8 595.8 705.8 592 715 C588.2 724.2 588.8 730 589.5 740 C590.2 750 592.2 765 596 775 C599.8 785 609.3 795.8 612 800" fill="none" stroke="#101010" stroke-width="1.35"/>
<clipPath id="cbore"><path d="M603 734.5 A90.4 71.5 0 1 0 783.8 734.5 A90.4 71.5 0 1 0 603 734.5 Z"/></clipPath>
<path d="M603 734.5 A90.4 71.5 0 1 0 783.8 734.5 A90.4 71.5 0 1 0 603 734.5 Z" fill="url(#gbore1)" stroke="#101010" stroke-width="1.5"/>
<g clip-path="url(#cbore)">
<path d="M609.4 757 A84 66 0 1 0 777.4 757 A84 66 0 1 0 609.4 757 Z" fill="#6a6a6a" stroke="#101010" stroke-width="1.35"/>
<path d="M615.4 761 A78 61 0 1 0 771.4 761 A78 61 0 1 0 615.4 761 Z" fill="#555" stroke="#101010" stroke-width="1.35"/>
<path d="M619 765.6 A74.4 58 0 1 0 767.8 765.6 A74.4 58 0 1 0 619 765.6 Z" fill="#f6f6f6" stroke="#101010" stroke-width="1.6"/>
</g>
<path d="M603 734.5 A90.4 71.5 0 1 0 783.8 734.5 A90.4 71.5 0 1 0 603 734.5 Z" fill="none" stroke="#101010" stroke-width="1.5"/>
</g>
<path d="M888.3 557 C888.3 557 888.3 552.4 892 551 C895.7 549.6 904.1 548.3 910.4 548.5 C916.7 548.7 925.9 549.9 930 552 C934.1 554.1 935 561 935 561 L927.6 600 C927.6 600 912.3 611 905 612 C897.7 613 884 606 884 606 L888.3 557 Z" fill="#555" stroke="#101010" stroke-width="1.35"/>
<path d="M899 551 L895.5 596 M921.5 551 L917.5 598" fill="none" stroke="#101010" stroke-width="1.2"/>
<linearGradient id="grod2" gradientUnits="userSpaceOnUse" x1="872" y1="700" x2="908" y2="705"><stop offset="0" stop-color="#4c4c4c"/><stop offset="0.5" stop-color="#747474"/><stop offset="1" stop-color="#4e4e4e"/></linearGradient>
<path d="M887.5 601 C887.5 601 887.6 596 891 594.5 C894.4 593 902.5 591.8 908 592 C913.5 592.2 920.7 594.2 924 595.5 C927.3 596.8 927.6 600 927.6 600 L890.7 820.2 C890.7 820.2 882.9 828.6 878 829 C873.1 829.4 861.2 822.7 861.2 822.7 L887.5 601 Z" fill="url(#grod2)" stroke="#101010" stroke-width="1.35"/>
<g transform="translate(671.4 426.2)"><ellipse cx="0" cy="0" rx="16.3" ry="13" fill="url(#ghole)" stroke="#101010" stroke-width="1.5"/></g>
<g transform="translate(983 353.3)"><ellipse cx="0" cy="0" rx="16.3" ry="13" fill="url(#ghole)" stroke="#101010" stroke-width="1.5"/></g>
<g transform="translate(1273.7 385.6)"><ellipse cx="0" cy="0" rx="16.3" ry="13" fill="url(#ghole)" stroke="#101010" stroke-width="1.5"/></g>
<g transform="translate(1425.8 558.3)"><ellipse cx="0" cy="0" rx="16.3" ry="13" fill="url(#ghole)" stroke="#101010" stroke-width="1.5"/></g>
<g transform="translate(480.1 579)"><ellipse cx="0" cy="0" rx="16.3" ry="13" fill="url(#ghole)" stroke="#101010" stroke-width="1.5"/></g>
<g transform="translate(649.6 866.5)"><ellipse cx="0" cy="0" rx="16.3" ry="13" fill="url(#ghole)" stroke="#101010" stroke-width="1.5"/></g>
<g clip-path="url(#ccav)">
<path d="M524.6 654 C526.3 648.2 531.3 628.7 535 619.4 C538.7 610.1 542.8 604.9 547 598 C551.2 591.1 552.1 585.8 560.5 578 C568.9 570.2 582.2 559.1 597.3 551 C612.3 542.9 634.7 535.2 650.8 529.5 C666.9 523.8 686.6 519.1 693.7 517" fill="none" stroke="#101010" stroke-width="1.35"/>
<path d="M651.7 470 L655 625 M692.7 455 L694 517 M695 533 L696.5 611 M531.8 569 L535.8 700 M1060 384 L1061.7 468 M1076.7 384 L1077.7 467" fill="none" stroke="#101010" stroke-width="1.35"/>
<path d="M693.7 517 C694.1 517.3 694.4 517.4 696 519 C697.6 520.6 703.3 526.5 703.3 526.5 C703.3 526.5 739.2 526.7 750.7 527.5 C762.2 528.3 765.2 529.3 772.4 531.1 C779.6 532.9 786.9 535.5 794.1 538.4 C801.3 541.3 808.6 544.3 815.8 548.5 C823 552.7 830.8 558.3 837.5 563.7 C844.2 569.1 851.2 575.2 856.3 581 C861.4 586.8 864.6 592.6 867.9 598.4 C871.1 604.2 874.5 612.9 875.8 615.8" fill="none" stroke="#101010" stroke-width="1.35"/>
</g>
<linearGradient id="gnub" x1="0" y1="0" x2="0" y2="1"><stop offset="0" stop-color="#4e4e4e"/><stop offset="0.45" stop-color="#8a8a8a"/><stop offset="1" stop-color="#4a4a4a"/></linearGradient>
<linearGradient id="gcylC" x1="0" y1="0" x2="1" y2="0"><stop offset="0" stop-color="#454545"/><stop offset="0.3" stop-color="#595959"/><stop offset="1" stop-color="#5f5f5f"/></linearGradient>
<linearGradient id="gcylE" x1="0" y1="0" x2="1" y2="0"><stop offset="0" stop-color="#646464"/><stop offset="0.5" stop-color="#5c5c5c"/><stop offset="1" stop-color="#484848"/></linearGradient>
<path d="M430 553 C430 553 449.5 548.7 455.5 547.7 C461.5 546.7 466.6 545.1 466 547 C465.4 548.9 455.7 554.3 452 559 C448.3 563.7 445.4 564.6 444 575 C442.6 585.4 443.5 621.5 443.5 621.5 L434 623.2 C434 623.2 436.5 608 437 600 C437.5 592 438.2 582.8 437 575 C435.8 567.2 430 553 430 553 Z" fill="url(#gnub)" stroke="#101010" stroke-width="1.35"/>
<ellipse cx="429.3" cy="588.4" rx="5.6" ry="35" fill="#4c4c4c" stroke="#101010" stroke-width="1.4" transform="rotate(-7 429.3 588.4)"/>
<ellipse cx="429.3" cy="589" rx="3.3" ry="17" fill="#8c8c8c" stroke="#101010" stroke-width="1.2" transform="rotate(-7 429.3 589)"/>
<ellipse cx="429.5" cy="590" rx="1.9" ry="12.5" fill="#4a4a4a" transform="rotate(-7 429.5 590)"/>
<path d="M442.6 578.5 C442.6 578.5 445.2 595.9 450 601 C454.8 606.1 464.8 607.5 471.5 609.3 C478.2 611.1 490.3 612 490.3 612 L493 669 C493 669 483.1 671 476.9 669.5 C470.6 668 461.1 664.2 455.5 660 C449.9 655.8 443.5 644 443.5 644 L442.6 578.5 Z" fill="url(#gcylC)" stroke="#101010" stroke-width="1.35"/>
<path d="M1463.1 557.5 C1463.1 557.5 1462.6 565 1460 569 C1457.4 573 1452.6 578.5 1447.6 581.5 C1442.6 584.5 1435.3 585.9 1430 587 C1424.7 588.1 1419 587.1 1415.5 588.2 C1412 589.3 1408.8 593.6 1408.8 593.6 L1407.5 645.8 C1407.5 645.8 1419.5 650.3 1426.2 649.8 C1432.9 649.3 1442.3 645.8 1447.6 643 C1452.9 640.2 1455.3 637 1458 633 C1460.7 629 1463.6 619 1463.6 619 L1463.1 557.5 Z" fill="url(#gcylE)" stroke="#101010" stroke-width="1.35"/>
<path d="M1311 383.5 C1311 383.5 1308.7 394.6 1306 399 C1303.3 403.4 1297.3 407.2 1295 410 C1292.7 412.8 1292.4 415.6 1292.4 415.6 C1292.4 415.6 1294.6 420.1 1297.7 422.3 C1300.8 424.5 1311 429 1311 429 L1311 383.5 Z" fill="#555" stroke="#101010" stroke-width="1.35"/>
<path d="M1388.7 520.5 L1419.5 512.8 L1423.5 514.6 L1428.9 528.5 L1412 530.5 L1399.4 536 L1392.7 529.4 Z" fill="#666" stroke="#101010" stroke-width="1.35"/>
<path d="M1408.2 640 C1408.2 640 1405.7 667.5 1403 680 C1400.3 692.5 1396.5 705 1392 715 C1387.5 725 1380.8 732.7 1376 740 C1371.2 747.3 1368.4 751.3 1363.2 758.8 C1358 766.3 1350.5 778.6 1345 785 C1339.5 791.4 1330 797 1330 797 L1335.5 815.6 C1335.5 815.6 1344.9 807.6 1349.3 803 C1353.7 798.4 1357.4 793.8 1362 788 C1366.6 782.2 1372.8 774.8 1377 768.5 C1381.2 762.2 1383.7 757.2 1387 750 C1390.3 742.8 1394.3 735 1397 725 C1399.7 715 1401.2 703.2 1403 690 C1404.8 676.8 1407.5 645.8 1407.5 645.8 L1408.2 640 Z" fill="#444" stroke="#101010" stroke-width="1.35"/>
<path d="M1317.5 786.5 L1352 754.6 L1357 760 L1327 794.8 L1317.5 786.5 Z" fill="#3c3c3c" stroke="#101010" stroke-width="1.35"/>
<path d="M694.2 860.6 C694.2 860.6 743.5 869.7 766.7 870.7 C789.9 871.7 810.1 870.7 833.3 866.7 C856.5 862.7 906 846.5 906 846.5 L910 893 C910 893 858.4 907.2 833.3 911 C808.2 914.8 782.2 916.1 759.3 915.6 C736.4 915.1 695.7 908.3 695.7 908.3 L694.2 860.6 Z" fill="#5e5e5e" stroke="#101010" stroke-width="1.35"/>
<path d="M766.6 917 L766.6 972" fill="none" stroke="#101010" stroke-width="1.35"/>
<path d="M766.6 920 C777.2 920.8 811.1 925.8 830 925 C848.9 924.2 866.7 919.2 880 915 C893.3 910.8 905 902.5 910 900" fill="none" stroke="#101010" stroke-width="1.35"/>
<path d="M766.6 928 C777.2 929 811.1 934.5 830 934 C848.9 933.5 866.3 929.3 880 925 C893.7 920.7 906.7 910.8 912 908" fill="none" stroke="#777" stroke-width="3"/>
<path d="M642.2 953 L642.4 966" fill="none" stroke="#101010" stroke-width="1.2"/>
<path d="M612.4 870.7 C612.4 870.7 619.8 888.2 626 893 C632.2 897.8 641.7 899.9 649.4 899.7 C657.1 899.5 666 895.9 672 892 C678 888.1 685.6 876.5 685.6 876.5 L687 931.5 C687 931.5 678.3 946.7 672 951 C665.7 955.3 657.2 957.5 649.4 957.5 C641.6 957.5 631 953.9 625 951 C619 948.1 613.2 940.2 613.2 940.2 L612.4 870.7 Z" fill="url(#gcyl)" stroke="#101010" stroke-width="1.35"/>
<path d="M910 858 C910 858 914.9 866.2 921 869 C927.1 871.8 938 875.5 946.7 875 C955.4 874.5 966.9 869.8 973 866 C979.1 862.2 983.3 852 983.3 852 L985.3 912.6 C985.3 912.6 979.1 925.7 973 930 C966.9 934.3 957.1 938.3 948.4 938.5 C939.7 938.7 927.4 934.4 921 931 C914.6 927.6 910.3 918 910.3 918 L910 858 Z" fill="url(#gcyl)" stroke="#101010" stroke-width="1.35"/>
<path d="M1261.6 823 C1261.6 823 1269.6 834.6 1276 838 C1282.4 841.4 1292 843.6 1300 843.3 C1308 843 1318.2 839.3 1324 836 C1329.8 832.7 1335 823.3 1335 823.3 L1335.3 878 C1335.3 878 1331.7 891.1 1326 896 C1320.3 900.9 1309.5 906.6 1301 907.4 C1292.5 908.2 1281.6 904.5 1275 901 C1268.4 897.5 1261.6 886.3 1261.6 886.3 L1261.6 823 Z" fill="url(#gcyl)" stroke="#101010" stroke-width="1.35"/>
<path d="M993 846.8 C993 846.8 1026.7 854.2 1046.7 856 C1066.8 857.8 1091.1 859 1113.3 857.5 C1135.5 856 1157 851.9 1180 847 C1203 842.1 1251 828.4 1251 828.4 L1251 875.8 C1251 875.8 1185.3 894.5 1159 899.5 C1132.7 904.5 1112.8 905.4 1093 906 C1073.2 906.6 1057.2 905.8 1040.5 903.4 C1023.8 901 993 891.6 993 891.6 L993 846.8 Z" fill="#5c5c5c" stroke="#101010" stroke-width="1.35"/>
<path d="M1161.6 882.4 L1227.4 862.6 C1227.4 862.6 1230.6 859.1 1232.6 865.3 C1234.6 871.4 1239.2 899.5 1239.2 899.5 C1239.2 899.5 1239.9 911.4 1239.2 915.3 C1238.5 919.2 1237.4 921.2 1235 923 C1232.6 924.8 1224.7 925.8 1224.7 925.8 L1182.6 931 C1182.6 931 1177.2 932.2 1175 928 C1172.8 923.8 1169.5 906 1169.5 906 L1161.6 882.4 Z" fill="#606060" stroke="#101010" stroke-width="1.35"/>
<path d="M1169.5 906 C1170.6 905.5 1164.4 904.1 1176 903 C1187.6 901.9 1228.7 900.1 1239.2 899.5" fill="none" stroke="#101010" stroke-width="1.2"/>
<g transform="translate(946.5 848)"><ellipse cx="0" cy="0" rx="16" ry="13" fill="url(#ghole)" stroke="#101010" stroke-width="1.5"/></g>
<g transform="translate(1297 813.8)"><ellipse cx="0" cy="0" rx="16" ry="13" fill="url(#ghole)" stroke="#101010" stroke-width="1.5"/></g>
<path d="M553.9 786.8 L585.7 815.7 L626.3 841.8 L619 854.8 L553.9 805.6 Z" fill="#4e4e4e" stroke="#101010" stroke-width="1.35"/>
<path d="M517.7 815.7 L553.9 804.2 L619 854.8 L613.2 873.6 L613.2 902.5 L517.7 826 Z" fill="#6a6a6a" stroke="#101010" stroke-width="1.35"/>
<path d="M517.7 826 L613.2 902.5 L613.2 940 L540 880 L513.4 861.5 Z" fill="#494949" stroke="#101010" stroke-width="1.35"/>
<path d="M490.8 744.9 L514.8 737.6 L553.9 786.8 L516.3 799.8 Z" fill="#6c6c6c" stroke="#101010" stroke-width="1.35"/>
<path d="M516.3 799.8 L553.9 786.8 L553.9 804.2 L517.7 817.2 Z" fill="#666" stroke="#101010" stroke-width="1.35"/>
<path d="M490.8 744.9 L516.3 799.8 L516.3 860.6 L513.4 861.5 L490.8 827.3 Z" fill="#4a4a4a" stroke="#101010" stroke-width="1.35"/>
<ellipse cx="504" cy="792" rx="1.6" ry="4.5" fill="#222"/>
<ellipse cx="505" cy="828" rx="3" ry="9" fill="#666" stroke="#101010" stroke-width="1.2" transform="rotate(-8 505 828)"/>
<path d="M716 977.8 C716 977.8 715 973.7 716 972 C717 970.3 721.8 967.7 721.8 967.7 L784 969 C784 969 790 974.4 791.2 977.8 C792.4 981.2 791.2 989.4 791.2 989.4 L742 1018.3 L716 977.8 Z" fill="#707070" stroke="#101010" stroke-width="1.35"/>
<path d="M742 1018.3 L791.2 989.4 L791.2 1050 L742 1080.5 Z" fill="#5c5c5c" stroke="#101010" stroke-width="1.35"/>
<path d="M716 977.8 L742 1018.3 L742 1080.5 C742 1080.5 736.1 1082.1 731.9 1079 C727.6 1075.9 716.5 1061.7 716.5 1061.7 L716 977.8 Z" fill="#4c4c4c" stroke="#101010" stroke-width="1.35"/>
<ellipse cx="773.8" cy="1015.4" rx="9.5" ry="6.5" fill="#707070" stroke="#101010" stroke-width="1.2" transform="rotate(-30 773.8 1015.4)"/>
<ellipse cx="752.1" cy="1061.7" rx="9.5" ry="6.5" fill="#707070" stroke="#101010" stroke-width="1.2" transform="rotate(-30 752.1 1061.7)"/>
<path d="M1371 682 C1371 682 1364.8 691.7 1360 698 C1355.2 704.3 1351.1 711 1342.4 720 C1333.7 729 1320.5 741.7 1307.8 751.9 C1295.1 762.1 1282.4 771.5 1266.2 781 C1250 790.5 1229.3 801.4 1210.8 808.6 C1192.3 815.8 1172.2 820.7 1155.4 824 C1138.6 827.3 1124.8 827.8 1110 828.5 C1095.2 829.2 1082.8 829.3 1066.8 828.4 C1050.8 827.5 1029.3 824.9 1014 823 C998.7 821.1 988.3 819 975 817 C961.7 815 934 811.3 934 811.3 C934 811.3 931.6 819 927.4 825.8 C923.2 832.6 916.5 843.7 909 852 C901.5 860.3 894.2 867.4 882.6 875.8 C871 884.1 839.2 902.1 839.2 902.1 C839.2 902.1 869.7 893.4 882.6 889 C895.5 884.6 905.8 878.7 916.8 875.8 C927.8 872.9 938.3 871.8 948.4 871.8 C958.5 871.8 966.4 872.9 977.4 875.8 C988.4 878.7 999.3 885.5 1014.2 889 C1029.1 892.5 1049.2 895.5 1066.8 896.8 C1084.3 898.1 1102 898.5 1119.5 896.8 C1137 895 1154.5 890.4 1172 886.3 C1189.5 882.2 1211.3 876.8 1224.7 872.4 C1238.1 868 1243.2 865 1252.4 859.9 C1261.6 854.8 1270.8 848.6 1280 841.9 C1289.2 835.2 1298.5 828.9 1307.8 819.7 C1317 810.5 1327.4 798.5 1335.5 786.5 C1343.6 774.5 1351.6 758.8 1356.2 747.7 C1360.8 736.6 1361.1 728.8 1363.2 720 C1365.3 711.2 1369 695 1369 695 L1371 682 Z" fill="rgba(40,140,178,0.5)" stroke="rgba(169,220,244,0.55)" stroke-width="1.2"/>
</svg>
</div>

<div id="toolbar" class="abs" style="left:840px;top:0;width:640px;height:70px;">
<svg width="640" height="70" viewBox="840 0 640 70">
<g stroke="#eeeeee" stroke-width="1.2">
<path d="M842 8 V64 M908.5 8 V64 M1234.5 8 V64 M1294 8 V64 M1360.4 8 V64 M1426.3 8 V64"/>
</g>
<!-- selected buttons -->
<rect x="974.9" y="7.5" width="56.5" height="58" rx="6" fill="#fafafa" stroke="#bfe0ee" stroke-width="1.2"/>
<rect x="1169.7" y="7.5" width="56.5" height="58" rx="6" fill="#fafafa" stroke="#bfe0ee" stroke-width="1.2"/>
<!-- icon1 solid cube -->
<g>
<path d="M862 30.6 L872 25 L881.8 30.6 L872 36.3 Z" fill="#e9e9e9" stroke="#777" stroke-width="0.8" stroke-linejoin="round"/>
<path d="M862 30.6 L872 36.3 L872 47.4 L862 41.8 Z" fill="#9a9a9a" stroke="#777" stroke-width="0.8" stroke-linejoin="round"/>
<path d="M881.8 30.6 L872 36.3 L872 47.4 L881.8 41.8 Z" fill="#cfcfcf" stroke="#777" stroke-width="0.8" stroke-linejoin="round"/>
<path d="M887.3 56 H892.5 V51" fill="none" stroke="#999" stroke-width="1.3"/>
</g>
<!-- icon2 cube with light blue faces, gray nodes -->
<g transform="translate(938.3 37)">
<path d="M-9.2 -5.3 L0 -10.6 L9.2 -5.3 L0 0 Z" fill="#d9eef7"/>
<path d="M-9.2 -5.3 L0 0 L0 10.8 L-9.2 5.4 Z" fill="#a9dcf0"/>
<path d="M9.2 -5.3 L0 0 L0 10.8 L9.2 5.4 Z" fill="#bfe4f3"/>
<path d="M-9.2 -5.3 L0 -10.6 L9.2 -5.3 L9.2 5.4 L0 10.8 L-9.2 5.4 Z M-9.2 -5.3 L0 0 L9.2 -5.3 M0 0 V10.8" fill="none" stroke="#a8a8a8" stroke-width="1"/>
<g fill="#a0a0a0"><circle cx="-9.2" cy="-5.3" r="2"/><circle cx="0" cy="-10.6" r="2"/><circle cx="9.2" cy="-5.3" r="2"/><circle cx="9.2" cy="5.4" r="2"/><circle cx="0" cy="10.8" r="2"/><circle cx="-9.2" cy="5.4" r="2"/><circle cx="0" cy="0" r="2"/></g>
</g>
<!-- icon3 black cube blue face -->
<g transform="translate(1002.4 37)">
<path d="M-9.2 -5.3 L0 0 L0 10.8 L-9.2 5.4 Z" fill="#29abe2"/>
<path d="M-9.2 -5.3 L0 -10.6 L9.2 -5.3 L9.2 5.4 L0 10.8 L-9.2 5.4 Z M-9.2 -5.3 L0 0 L9.2 -5.3 M0 0 V10.8" fill="none" stroke="#111" stroke-width="1.3"/>
<g fill="#111"><circle cx="-9.2" cy="-5.3" r="2.1"/><circle cx="0" cy="-10.6" r="2.1"/><circle cx="9.2" cy="-5.3" r="2.1"/><circle cx="9.2" cy="5.4" r="2.1"/><circle cx="0" cy="10.8" r="2.1"/><circle cx="-9.2" cy="5.4" r="2.1"/><circle cx="0" cy="0" r="2.1"/></g>
</g>
<!-- icon4 light-blue edges, gray nodes -->
<g transform="translate(1067.5 37)">
<path d="M-9.2 -5.3 L0 -10.6 L9.2 -5.3 L9.2 5.4 L0 10.8 L-9.2 5.4 Z M-9.2 -5.3 L0 0 L9.2 -5.3 M0 0 V10.8" fill="none" stroke="#a9dcf0" stroke-width="1"/>
<g fill="#a0a0a0"><circle cx="-9.2" cy="-5.3" r="2"/><circle cx="0" cy="-10.6" r="2"/><circle cx="9.2" cy="-5.3" r="2"/><circle cx="9.2" cy="5.4" r="2"/><circle cx="0" cy="10.8" r="2"/><circle cx="-9.2" cy="5.4" r="2"/><circle cx="0" cy="0" r="2"/></g>
</g>
<!-- icon5 gray edges, light-blue nodes -->
<g transform="translate(1131.4 37)">
<path d="M-9.2 -5.3 L0 -10.6 L9.2 -5.3 L9.2 5.4 L0 10.8 L-9.2 5.4 Z M-9.2 -5.3 L0 0 L9.2 -5.3 M0 0 V10.8" fill="none" stroke="#a8a8a8" stroke-width="1"/>
<g fill="#a9dcf0"><circle cx="-9.2" cy="-5.3" r="2"/><circle cx="0" cy="-10.6" r="2"/><circle cx="9.2" cy="-5.3" r="2"/><circle cx="9.2" cy="5.4" r="2"/><circle cx="0" cy="10.8" r="2"/><circle cx="-9.2" cy="5.4" r="2"/><circle cx="0" cy="0" r="2"/></g>
</g>
<!-- pin -->
<circle cx="1197.9" cy="29.2" r="6.4" fill="#3a3a3a"/>
<path d="M1197.9 33 V46" stroke="#3a3a3a" stroke-width="1.5"/>
<circle cx="1197.9" cy="47.9" r="2.2" fill="#3a3a3a"/>
<!-- box select -->
<rect x="1253.6" y="28.3" width="17.8" height="12.7" fill="none" stroke="#222" stroke-width="1.7" stroke-dasharray="4.6 2"/>
<path d="M1267.8 37.8 V49 L1270.4 46.6 L1272.2 50.3 L1273.7 49.6 L1271.9 46 L1275.3 45.6 Z" fill="#111" stroke="#f6f6f6" stroke-width="0.6"/>
<!-- beta mesh -->
<g transform="translate(1325.5 36.8)" stroke="#555" fill="none" stroke-width="0.9">
<path d="M-8.3 -6.8 L-2.6 -9.6 L7.2 -4.8 L8.3 6 L2 9.6 L-7.6 4.2 Z" fill="#cfcfcf"/>
<path d="M-8.3 -6.8 L1.2 -2 L7.2 -4.8 M1.2 -2 L2 9.6"/>
<path d="M-5 -5.2 L-4.4 6 M-1.8 -3.6 L-1.2 7.8 M-8 -3.1 L1.5 1.9 L7.6 -1.2 M-7.8 0.6 L1.7 5.8 L8 2.4 M4.2 -3.4 L5 7.9 M-5.4 -8.2 L4.2 -3.4 M-2.6 -9.6 L-5 -5.2 M2.3 -7.2 L-1.8 -3.6"/>
<g fill="#555" stroke="none"><circle cx="-8.3" cy="-6.8" r="1.9"/><circle cx="-2.6" cy="-9.6" r="1.9"/><circle cx="7.2" cy="-4.8" r="1.9"/><circle cx="8.3" cy="6" r="1.9"/><circle cx="2" cy="9.6" r="1.9"/><circle cx="-7.6" cy="4.2" r="1.9"/><circle cx="1.2" cy="-2" r="1.9"/></g>
</g>
<rect x="1311.6" y="7.8" width="42.6" height="16.4" rx="8.2" fill="#fff" stroke="#e4e4e4" stroke-width="0.8"/>
<text x="1318.3" y="20" class="b" style="font-size:10.5px;fill:#666" textLength="29.2" lengthAdjust="spacingAndGlyphs">BETA</text>
<!-- tape measure -->
<g fill="none" stroke="#333" stroke-width="1.1" stroke-linejoin="round">
<path d="M1386.5 41.5 V33 Q1386.5 26 1394 24.6 L1401.5 28 V37.5 L1393.5 42.5 Z" fill="#f6f6f6"/>
<path d="M1394 24.6 Q1389 27 1389.3 34 V43"/>
<path d="M1386.8 36 L1389.3 37.3 L1401.5 31"/>
<path d="M1386.5 41.5 L1377.5 45.5 L1382.5 47.8 L1393.5 42.5"/>
<path d="M1380.5 44.5 L1385 46.5 M1383 43.4 L1387.5 45.4" stroke-width="0.9"/>
<circle cx="1393.2" cy="38.2" r="0.5" fill="#333"/>
</g>
<!-- AI wand -->
<g fill="none" stroke="#bdbdbd" stroke-width="1.4">
<path d="M1441.8 45.2 L1460.2 26.8 L1463.6 30 L1445.2 48.4 Z" stroke-linejoin="round"/>
<path d="M1453.8 33.2 L1457.2 36.5"/>
<path d="M1443 29.5 H1448.6 M1445.8 26.7 V32.3"/>
<path d="M1451.3 25 H1455.3 M1453.3 23 V27"/>
</g>
<text x="1457.3" y="46.8" style="font-size:13.5px;fill:#bdbdbd" textLength="13.5" lengthAdjust="spacingAndGlyphs">AI</text>
<path d="M1471.5 56.5 H1476.8 V51.3" fill="none" stroke="#c8c8c8" stroke-width="1.3"/>

</svg>
</div>

<div id="leftpanel" class="abs">
<svg width="523" height="425" viewBox="1 1 523 425">
<!-- header -->
<text x="25.5" y="44.5" class="b" style="font-size:22.6px;fill:#252525" textLength="165.5" lengthAdjust="spacingAndGlyphs">Heated Region 1</text>
<rect x="412" y="11" width="48" height="48" rx="5" fill="#0077a8"/>
<path d="M427 35.5 L433.5 41.5 L445 28.5" fill="none" stroke="#fff" stroke-width="2"/>
<rect x="466.5" y="11.5" width="46.5" height="47" rx="5" fill="#fff" stroke="#e3e3e3"/>
<path d="M484.3 29.5 L495.3 40.5 M495.3 29.5 L484.3 40.5" stroke="#555" stroke-width="1.4" fill="none"/>
<rect x="1" y="67.5" width="523" height="1" fill="#dedede"/>
<!-- boundary conditions -->
<text x="19.5" y="112" class="t" textLength="175.5" lengthAdjust="spacingAndGlyphs">Boundary conditions</text>
<text x="310.8" y="112" class="t" textLength="142.2" lengthAdjust="spacingAndGlyphs">Surface heat flux</text>
<path d="M488 102 L493.7 108 L499.5 102" fill="none" stroke="#555" stroke-width="1.5"/>
<rect x="304.5" y="127.5" width="201" height="1" fill="#d8d8d8"/>
<!-- heatflux -->
<text x="19.5" y="165.7" class="t" textLength="123.5" lengthAdjust="spacingAndGlyphs">Heatflux value</text>
<circle cx="221.7" cy="160" r="20" fill="#4a86e8"/>
<text x="221.2" y="169.6" text-anchor="middle" style="font-size:27px;fill:#fff">1</text>
<rect x="406" y="187.5" width="4.5" height="1" fill="#d8d8d8"/>
<rect x="269.2" y="139.5" width="134.8" height="49" fill="#fff" stroke="#4a86e8" stroke-width="3"/>
<text x="311" y="173" class="t" textLength="45" lengthAdjust="spacingAndGlyphs">2900</text>
<text x="435" y="173" class="t" textLength="46" lengthAdjust="spacingAndGlyphs">W/m²</text>
<path d="M488 162.3 L493.7 168.3 L499.5 162.3" fill="none" stroke="#555" stroke-width="1.5"/>
<rect x="429" y="187.5" width="76.5" height="1" fill="#d8d8d8"/>
<!-- button group -->
<rect x="370.5" y="196" width="81.5" height="40" rx="5" fill="#fff" stroke="#e0e0e0"/>
<rect x="410.8" y="196" width="1" height="40" fill="#e0e0e0"/>
<g stroke="#666" stroke-width="1.3" fill="none">
<rect x="382.5" y="210.5" width="16.5" height="11.5"/>
<path d="M382.5 214.3 H399 M382.5 218.2 H399 M387.2 210.5 V222"/>
</g>
<path d="M422.5 217 L424.5 216 L427.5 222.5 L430.5 209.8 L440.5 209.8" fill="none" stroke="#666" stroke-width="1.3"/>
<path d="M434 214.5 L438.8 219.5 M438.8 214.5 L434 219.5" fill="none" stroke="#666" stroke-width="1.3"/>
<text x="465" y="221.5" class="t lnk" textLength="40.5" lengthAdjust="spacingAndGlyphs">Reset</text>
<!-- assigned faces -->
<text x="19.5" y="273.7" class="t b" style="fill:#222" textLength="131" lengthAdjust="spacingAndGlyphs">Assigned Faces</text>
<text x="157.5" y="273.7" class="t" style="fill:#555" textLength="22" lengthAdjust="spacingAndGlyphs">(3)</text>
<text x="442" y="273.7" class="t lnk" textLength="63.5" lengthAdjust="spacingAndGlyphs">Clear list</text>
<rect x="19.5" y="291.5" width="485.5" height="49" fill="#e8f5fc" stroke="#27b0de" stroke-width="1"/>
<rect x="19" y="291" width="3" height="50" fill="#27b0de"/>
<text x="34.5" y="323" class="t" textLength="140.5" lengthAdjust="spacingAndGlyphs">Heated Region 1</text>
<circle cx="481.3" cy="315.7" r="10.3" fill="#fff" stroke="#cfcfcf" stroke-width="1.2"/>
<path d="M477.3 311.7 L485.3 319.7 M485.3 311.7 L477.3 319.7" stroke="#555" stroke-width="1.4" fill="none"/>
<rect x="1" y="352.5" width="523" height="1" fill="#dedede"/>
<!-- trash -->
<rect x="17" y="366.5" width="46.5" height="46.5" rx="5" fill="#fff" stroke="#e3e3e3"/>
<g fill="none" stroke="#666" stroke-width="1.3">
<path d="M31.5 383.5 H48.5"/>
<path d="M36 383.5 V381 Q36 379.8 37.2 379.8 H42.8 Q44 379.8 44 381 V383.5"/>
<path d="M33 383.5 V396 Q33 398 35 398 H45 Q47 398 47 396 V383.5"/>
<path d="M37 386.5 V395 M40 386.5 V395 M43 386.5 V395"/>
</g>

</svg>
</div>

<div id="rightpanel" class="abs">
<svg width="352" height="450" viewBox="1803 2 352 450">
<!-- geometry -->
<path d="M1823.3 25.6 L1830 32.6 L1836.7 25.6" fill="none" stroke="#555" stroke-width="1.5"/>
<text x="1851.3" y="36" class="b" style="font-size:21px;fill:#2a2a2a" textLength="106.7" lengthAdjust="spacingAndGlyphs">GEOMETRY</text>
<path d="M1830.8 58 V69.5" stroke="#dcdcdc" stroke-width="1" fill="none"/>
<rect x="1822.5" y="69.5" width="15" height="15" fill="#fff" stroke="#dcdcdc"/>
<path d="M1826.5 77 H1833.5" stroke="#666" stroke-width="1.2"/>
<text x="1851.3" y="83.7" class="b" style="font-size:20px;fill:#2a2a2a" textLength="163.7" lengthAdjust="spacingAndGlyphs">Differential Casing</text>
<path d="M1866.5 100 V120 H1874" stroke="#dcdcdc" stroke-width="1" fill="none"/>
<g>
<path d="M1891.3 113.2 L1901.8 107.5 L1912 113.2 L1901.8 119 Z" fill="#e6e6e6"/>
<path d="M1891.3 113.2 L1901.8 119 L1901.8 131.5 L1891.3 125.6 Z" fill="#999"/>
<path d="M1912 113.2 L1901.8 119 L1901.8 131.5 L1912 125.6 Z" fill="#c9c9c9"/>
</g>
<text x="1924" y="126" class="t" textLength="159.7" lengthAdjust="spacingAndGlyphs">Differential Casing</text>
<rect x="1803" y="152" width="352" height="1" fill="#dedede"/>
<!-- saved selections -->
<path d="M1823.3 175.6 L1830 182.6 L1836.7 175.6" fill="none" stroke="#555" stroke-width="1.5"/>
<text x="1851.3" y="186" class="b" style="font-size:21px;fill:#2a2a2a" textLength="180" lengthAdjust="spacingAndGlyphs">SAVED SELECTIONS</text>
<circle cx="2125.8" cy="179" r="10.4" fill="#fff" stroke="#d5dbe3" stroke-width="1"/>
<path d="M2121.8 179 H2129.8 M2125.8 175 V183" stroke="#555" stroke-width="1.1"/>
<rect x="1803" y="206" width="352" height="41.7" fill="#e8f5fc"/>
<path d="M1830.8 208 V312 H1838 M1830.8 227.5 H1838 M1830.8 269.5 H1838" stroke="#d4d9dc" stroke-width="1.2" fill="none"/>
<g id="faceicon">
<path d="M1866.5 217.5 L1877.3 222 L1877.3 235 L1866.5 230.5 Z" fill="#ececec"/>
<path d="M1861 219.5 L1871.8 224.5 L1871.8 238 L1861 233 Z" fill="#cfcfcf"/>
<path d="M1855.5 221.5 L1866.3 226.5 L1866.3 240 L1855.5 234.5 Z" fill="#8f8f8f"/>
</g>
<use href="#faceicon" y="42"/>
<use href="#faceicon" y="84"/>
<text x="1887.8" y="234.2" class="t" style="fill:#27b0de" textLength="140.2" lengthAdjust="spacingAndGlyphs">Heated Region 1</text>
<circle cx="2077.8" cy="227.7" r="19.8" fill="#4a86e8"/>
<text x="2077.3" y="237.3" text-anchor="middle" style="font-size:27px;fill:#fff">2</text>
<text x="1887.8" y="276" class="t" textLength="67" lengthAdjust="spacingAndGlyphs">Outside</text>
<text x="1887.8" y="318" class="t" textLength="140.7" lengthAdjust="spacingAndGlyphs">Heated Region 2</text>
<rect x="1803" y="344.3" width="352" height="1" fill="#dedede"/>
<!-- geometry primitives -->
<text x="1815.5" y="377.7" class="b" style="font-size:21px;fill:#2a2a2a" textLength="219.3" lengthAdjust="spacingAndGlyphs">GEOMETRY PRIMITIVES</text>
<circle cx="2125.8" cy="370.7" r="10.4" fill="#fff" stroke="#d5dbe3" stroke-width="1"/>
<path d="M2121.8 370.7 H2129.8 M2125.8 366.7 V374.7" stroke="#555" stroke-width="1.1"/>
<rect x="1803" y="398" width="352" height="1" fill="#dedede"/>
<!-- show faces -->
<text x="1821" y="433" class="t" textLength="94.5" lengthAdjust="spacingAndGlyphs">Show faces</text>
<rect x="2112" y="420.3" width="25" height="11.4" rx="5.7" fill="#ececec"/>
<circle cx="2112.7" cy="427.5" r="12.5" fill="rgba(0,0,0,.10)" filter="url(#blur2)"/>
<circle cx="2112.7" cy="426" r="11.2" fill="#fff" stroke="#c4c4c4" stroke-width="1"/>
<defs><filter id="blur2" x="-50%" y="-50%" width="200%" height="200%"><feGaussianBlur stdDeviation="2"/></filter></defs>

</svg>
</div>

<div id="overlay" class="abs" style="left:0;top:0;width:2166px;height:1382px;pointer-events:none;">
<svg width="2166" height="1382" viewBox="0 0 2166 1382">
<!-- resize handle -->
<path d="M1793.5 248 V271.5 M1798.7 248 V271.5" stroke="#c9c9c9" stroke-width="1.2"/>
<!-- scale bar -->
<path d="M711.5 1341 V1345.5 H1063.5 V1341" fill="none" stroke="#3d3d3d" stroke-width="3"/>
<text x="864.5" y="1375" style="font-size:19px;fill:#444" textLength="46.2" lengthAdjust="spacingAndGlyphs">0.1 m</text>
<!-- chat button -->
<defs><filter id="chsh" x="-50%" y="-50%" width="200%" height="200%"><feGaussianBlur stdDeviation="6"/></filter></defs>
<circle cx="2101.8" cy="1073" r="36" fill="rgba(0,0,0,.16)" filter="url(#chsh)"/>
<circle cx="2101.8" cy="1069.8" r="36" fill="#0073a8"/>
<path d="M2091.5 1052 H2114 Q2118 1052 2118 1056 V1087.6 Q2114.5 1083.8 2109 1083.5 H2091.5 Q2086.2 1083.5 2086.2 1078.5 V1057 Q2086.2 1052 2091.500 1052 Z" fill="#fff"/>
<path d="M2091 1073.5 Q2102 1081.5 2113 1073.5" fill="none" stroke="#0073a8" stroke-width="1.8" stroke-linecap="round"/>
<!-- nav cube -->
<g fill="none" stroke="#555" stroke-width="1.5">
<path d="M2013.7 1123.5 L2021 1116.7 L2028.3 1123.500"/>
<path d="M2013.7 1342.8 L2021 1349.600 L2028.3 1342.8"/>
<path d="M1911.5 1225.5 L1904.7 1232.800 L1911.5 1240"/>
<path d="M2130.8 1225.5 L2137.600 1232.800 L2130.800 1240"/>
</g>
<!-- rotate icons -->
<g fill="none" stroke="#666" stroke-width="1.1">
<path d="M1936 1303.500 A9 9 0 1 1 1934.500 1316"/>
<path d="M2101.500 1303.500 A9 9 0 1 0 2103 1316"/>
</g>
<path d="M1931.500 1307.500 L1937.500 1309 L1935 1303.500 Z" fill="#555"/>
<path d="M2106 1307.500 L2100 1309 L2102.500 1303.500 Z" fill="#555"/>
<!-- cube -->
<g stroke="#b3b3b3" stroke-width="1.2" stroke-linejoin="round">
<path d="M1964.800 1178 L1982.300 1246.600 L1983.100 1302.400 L1965.600 1232.200 Z" fill="#f2f2f2"/>
<path d="M1964.800 1178 L2053.300 1163.600 L2070.900 1233.500 L1982.300 1246.600 Z" fill="#fafafa"/>
<path d="M1982.300 1246.600 L2070.900 1233.500 L2071.700 1288.500 L1983.100 1302.400 Z" fill="#fafafa"/>
</g>
<g stroke="#cfcfcf" stroke-width="1" stroke-dasharray="4 3" fill="none">
<path d="M2053.300 1163.600 L2053.900 1219.100 L2071.700 1288.500"/>
<path d="M1965.600 1232.200 L2053.900 1219.100"/>
</g>
<text transform="matrix(-0.985 0.16 -0.06 -1 2049 1191.500)" style="font-size:15.500px;fill:#777" textLength="62" lengthAdjust="spacingAndGlyphs">BOTTOM</text>
<text transform="matrix(0.985 -0.15 0 1 2010.500 1274)" style="font-size:11px;fill:#777" textLength="30.500" lengthAdjust="spacingAndGlyphs">LEFT</text>
<!-- axes -->
<path d="M1959.600 1170 L2084 1150.600" stroke="#f77" stroke-width="1.3" fill="none"/>
<path d="M2094.500 1149 L2078 1148.300 L2079.300 1154.600 Z" fill="#f77"/>
<path d="M1959.600 1170 L1958.900 1245" stroke="#66f" stroke-width="1.3" fill="none"/>
<path d="M1958.800 1256 L1956 1243.500 L1962 1243.500 Z" fill="#77f"/>
<path d="M1959.600 1170 L1981.500 1265" stroke="#6e6" stroke-width="1.3" fill="none"/>
<path d="M1983.500 1276.500 L1978.300 1264.500 L1984.300 1263.200 Z" fill="#7e7"/>
<text x="2104.500" y="1154" style="font-size:19px;fill:#f33">X</text>
<text x="1954.800" y="1273.500" style="font-size:19px;fill:#44f">Z</text>
<text x="1984.500" y="1295" style="font-size:19px;fill:#3e3">y</text>
<!-- home -->
<g fill="none" stroke="#666" stroke-width="1.3" stroke-linejoin="round">
<path d="M2086 1159.500 L2094 1152 L2102 1159.500"/>
<path d="M2088.300 1158 V1166.800 H2092 V1161.500 H2096 V1166.800 H2099.700 V1158"/>
</g>
<!-- marker pin -->
<path d="M952.600 455 L954 633.500" stroke="#e22d38" stroke-width="2.200"/>
<circle cx="954" cy="633.500" r="5.500" fill="#e22d38"/>
<circle cx="952.300" cy="421.700" r="36" fill="#e42d38"/>
<g fill="none" stroke="#fff" stroke-width="1.200">
<path d="M934.300 437.800 L944 430.200 L971.400 430.200 L962.300 437.800 Z"/>
<path d="M946.300 411.500 Q948.800 415.200 946.800 419 Q944.800 422.800 946.800 426" stroke="#fbd0d3"/>
<path d="M952.800 411.500 Q955.300 415.200 953.300 419 Q951.300 422.800 953.300 426" stroke="#fbd0d3"/>
<path d="M959 411.500 Q961.500 415.200 959.500 419 Q957.500 422.800 959.500 426" stroke="#fbd0d3"/>
</g>
<text x="984" y="400" style="font-size:31.500px;fill:#e63946" textLength="16" lengthAdjust="spacingAndGlyphs">3</text>

</svg>
</div>
</body>
</html>
